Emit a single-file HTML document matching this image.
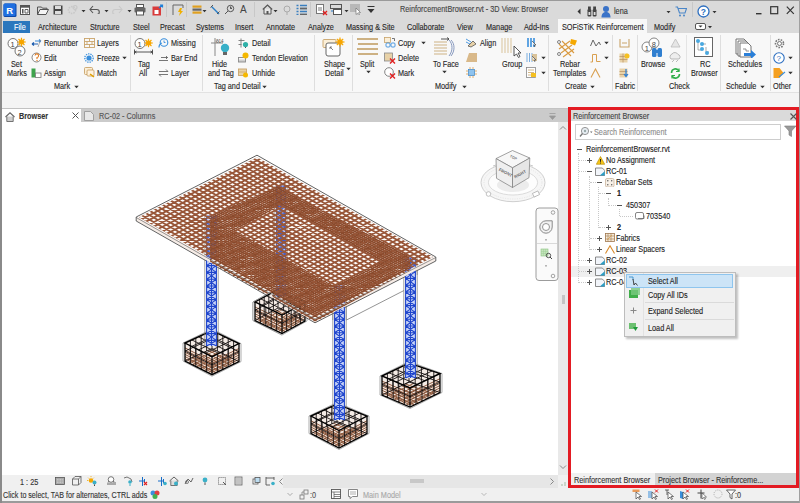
<!DOCTYPE html>
<html><head><meta charset="utf-8">
<style>
*{margin:0;padding:0;box-sizing:border-box}
html,body{width:800px;height:503px;overflow:hidden;background:#f0f0f0}
body{position:relative;font-family:"Liberation Sans",sans-serif;font-size:7.3px;color:#3a3a3a}
.a{position:absolute}
.t{position:absolute;white-space:nowrap;line-height:10px;height:10px;font-size:8.4px;transform:translateY(-0.5px) scaleX(0.87);transform-origin:0 0;color:#262626;-webkit-text-stroke:0.12px currentColor}
.r{background:#f5f5f5}
</style></head><body>
<!-- title bar -->
<div class="a" style="left:0;top:0;width:800px;height:19px;background:#dadada"></div>
<div class="a" style="left:0;top:0;width:800px;height:1px;background:#9a9a9a"></div>
<!-- tab row -->
<div class="a" style="left:0;top:19px;width:800px;height:14px;background:#dadada"></div>
<div class="a" style="left:3px;top:21px;width:27px;height:12px;background:#2b77bd"></div>
<div class="t" style="left:14px;top:22px;color:#fff">File</div>
<div class="a" style="left:558px;top:19px;width:89px;height:15px;background:#f8f8f8"></div>
<!-- ribbon -->
<div class="a" style="left:0;top:33px;width:800px;height:59px;background:#f8f8f8"></div>
<div class="a" style="left:0;top:92px;width:800px;height:1px;background:#e2e2e2"></div>
<!-- strip -->
<div class="a" style="left:0;top:93px;width:800px;height:15px;background:#f4f4f4"></div>
<div class="a" style="left:0;top:108px;width:568px;height:1px;background:#c2c2c2"></div>
<!-- view tabs -->
<div class="a" style="left:0;top:109px;width:568px;height:13px;background:#cbcbcb"></div>
<div class="a" style="left:2px;top:109px;width:79px;height:14px;background:#ffffff"></div>
<!-- viewport -->
<div class="a" style="left:2px;top:122px;width:556px;height:353px;background:#ffffff"></div>
<div class="a" style="left:558px;top:122px;width:10px;height:353px;background:#e9e9e9"></div>
<!--MODEL--><svg class="a" style="left:0;top:0" width="800" height="503" viewBox="0 0 800 503">
<defs>
<clipPath id="slabc"><polygon points="138.8,217.3 257.0,157.2 433.2,257.0 315.0,317.0"/></clipPath>
<clipPath id="bandc"><path d="M210.0,216.0 278.0,186.0 409.0,256.0 411.0,270.0 315.0,322.0 210.0,263.0Z M235.0,230.5 281.0,205.0 380.0,261.0 334.0,286.0Z" clip-rule="evenodd"/></clipPath>
<clipPath id="bfc"><polygon points="250,292 270,292 282,314 282,340 250,340"/></clipPath>
<clipPath id="outs"><path d="M0 0H800V503H0Z M137.0,217.0 257.0,156.0 435.0,257.0 435.0,261.0 315.0,322.0 137.0,221.0Z" clip-rule="evenodd"/></clipPath>
</defs>
<polygon points="253.0,302.0 278.0,288.0 307.0,302.5 307.0,321.0 282.0,335.0 253.0,320.5" fill="#fff" stroke="#777" stroke-width="0.6"/>
<polygon points="255.0,302.0 278.0,289.5 305.0,302.5 305.0,321.0 282.0,333.5 255.0,320.5" fill="#f4ebe5"/>
<path d="M258.3 318.7L285.3 331.7M258.9 322.4L281.9 309.9M261.6 316.9L288.6 329.9M262.7 324.2L285.7 311.7M264.9 315.1L291.9 328.1M266.6 326.1L289.6 313.6M268.1 313.4L295.1 326.4M270.4 327.9L293.4 315.4M271.4 311.6L298.4 324.6M274.3 329.8L297.3 317.3M274.7 309.8L301.7 322.8M278.1 331.6L301.1 319.1M255.0 307.0L282.0 320.0L305.0 307.5M255.0 309.3L282.0 322.3L305.0 309.8M255.0 311.5L282.0 324.5L305.0 312.0M255.0 313.8L282.0 326.8L305.0 314.3M255.0 316.0L282.0 329.0L305.0 316.5M255.0 318.3L282.0 331.3L305.0 318.8" fill="none" stroke="#8e5a3e" stroke-width="1.0"/>
<path d="M278.0 289.5V308.0M255.0 320.5L278.0 308.0L305.0 321.0M260.4 304.6v18.5M286.6 312.5v18.5M259.6 299.5v18.5M283.4 292.1v18.5M265.8 307.2v18.5M291.2 310.0v18.5M264.2 297.0v18.5M288.8 294.7v18.5M271.2 309.8v18.5M295.8 307.5v18.5M268.8 294.5v18.5M294.2 297.3v18.5M276.6 312.4v18.5M300.4 305.0v18.5M273.4 292.0v18.5M299.6 299.9v18.5M260.8 298.9L287.8 311.9M261.8 305.2L284.8 292.8M266.5 295.8L293.5 308.8M268.5 308.5L291.5 296.0M272.2 292.6L299.2 305.6M275.2 311.8L298.2 299.2M255.0 310.3L282.0 323.3L305.0 310.8M255.0 310.3L278.0 297.8L305.0 310.8" fill="none" stroke="#161212" stroke-width="0.9"/>
<polygon points="255.0,302.0 278.0,289.5 305.0,302.5 282.0,315.0" fill="none" stroke="#000" stroke-width="1.4"/>
<polyline points="255.0,302.0 255.0,320.5 282.0,333.5 305.0,321.0 305.0,302.5" fill="none" stroke="#000" stroke-width="1.3"/>
<path d="M282.0 315.0V333.5" stroke="#000" stroke-width="1.2"/>
<polygon points="183.0,343.0 212.0,329.0 241.0,343.6 241.0,361.6 212.0,376.2 183.0,361.0" fill="#fff" stroke="#777" stroke-width="0.6"/>
<polygon points="185.0,343.0 212.0,330.5 239.0,343.6 239.0,361.6 212.0,374.7 185.0,361.0" fill="#f4ebe5"/>
<path d="M188.9 359.2L215.9 372.8M188.9 363.0L215.9 350.4M192.7 357.4L219.7 371.0M192.7 364.9L219.7 352.2M196.6 355.6L223.6 369.1M196.6 366.9L223.6 354.1M200.4 353.9L227.4 367.2M200.4 368.8L227.4 356.0M204.3 352.1L231.3 365.3M204.3 370.8L231.3 357.9M208.1 350.3L235.1 363.5M208.1 372.7L235.1 359.7M185.0 347.9L212.0 361.6L239.0 348.5M185.0 350.1L212.0 363.8L239.0 350.7M185.0 352.3L212.0 366.0L239.0 352.9M185.0 354.4L212.0 368.1L239.0 355.0M185.0 356.6L212.0 370.3L239.0 357.2M185.0 358.8L212.0 372.5L239.0 359.4" fill="none" stroke="#8e5a3e" stroke-width="1.0"/>
<path d="M212.0 330.5V348.5M185.0 361.0L212.0 348.5L239.0 361.6M190.4 345.7v18M217.4 354.1v18M190.4 340.5v18M217.4 333.1v18M195.8 348.5v18M222.8 351.5v18M195.8 338.0v18M222.8 335.7v18M201.2 351.2v18M228.2 348.8v18M201.2 335.5v18M228.2 338.4v18M206.6 354.0v18M233.6 346.2v18M206.6 333.0v18M233.6 341.0v18M191.8 339.9L218.8 353.4M191.8 346.4L218.8 333.8M198.5 336.8L225.5 350.1M198.5 349.9L225.5 337.1M205.2 333.6L232.2 346.9M205.2 353.3L232.2 340.3M185.0 351.1L212.0 364.8L239.0 351.7M185.0 351.1L212.0 338.6L239.0 351.7" fill="none" stroke="#161212" stroke-width="0.9"/>
<polygon points="185.0,343.0 212.0,330.5 239.0,343.6 212.0,356.7" fill="none" stroke="#000" stroke-width="1.4"/>
<polyline points="185.0,343.0 185.0,361.0 212.0,374.7 239.0,361.6 239.0,343.6" fill="none" stroke="#000" stroke-width="1.3"/>
<path d="M212.0 356.7V374.7" stroke="#000" stroke-width="1.2"/>
<polygon points="380.0,376.0 409.0,361.5 442.0,373.5 442.0,392.5 410.0,408.5 380.0,395.0" fill="#fff" stroke="#777" stroke-width="0.6"/>
<polygon points="382.0,376.0 409.0,363.0 440.0,373.5 440.0,392.5 410.0,407.0 382.0,395.0" fill="#f4ebe5"/>
<path d="M385.9 393.1L414.3 404.9M386.0 396.7L413.4 383.5M389.7 391.3L418.6 402.9M390.0 398.4L417.9 385.0M393.6 389.4L422.9 400.8M394.0 400.1L422.3 386.5M397.4 387.6L427.1 398.7M398.0 401.9L426.7 388.0M401.3 385.7L431.4 396.6M402.0 403.6L431.1 389.5M405.1 383.9L435.7 394.6M406.0 405.3L435.6 391.0M382.0 381.2L410.0 393.2L440.0 378.7M382.0 383.5L410.0 395.5L440.0 381.0M382.0 385.8L410.0 397.8L440.0 383.3M382.0 388.1L410.0 400.1L440.0 385.6M382.0 390.4L410.0 402.4L440.0 387.9M382.0 392.7L410.0 404.7L440.0 390.2" fill="none" stroke="#8e5a3e" stroke-width="1.0"/>
<path d="M409.0 363.0V382.0M382.0 395.0L409.0 382.0L440.0 392.5M387.6 378.4v19M416.0 385.1v19M387.4 373.4v19M415.2 365.1v19M393.2 380.8v19M422.0 382.2v19M392.8 370.8v19M421.4 367.2v19M398.8 383.2v19M428.0 379.3v19M398.2 368.2v19M427.6 369.3v19M404.4 385.6v19M434.0 376.4v19M403.6 365.6v19M433.8 371.4v19M388.8 372.8L417.5 384.4M389.0 379.0L416.8 365.6M395.5 369.5L425.0 380.8M396.0 382.0L424.5 368.2M402.2 366.2L432.5 377.1M403.0 385.0L432.2 370.9M382.0 384.6L410.0 396.6L440.0 382.1M382.0 384.6L409.0 371.6L440.0 382.1" fill="none" stroke="#161212" stroke-width="0.9"/>
<polygon points="382.0,376.0 409.0,363.0 440.0,373.5 410.0,388.0" fill="none" stroke="#000" stroke-width="1.4"/>
<polyline points="382.0,376.0 382.0,395.0 410.0,407.0 440.0,392.5 440.0,373.5" fill="none" stroke="#000" stroke-width="1.3"/>
<path d="M410.0 388.0V407.0" stroke="#000" stroke-width="1.2"/>
<polygon points="309.0,416.0 337.0,402.5 369.0,416.0 369.0,433.5 339.0,449.5 309.0,433.5" fill="#fff" stroke="#777" stroke-width="0.6"/>
<polygon points="311.0,416.0 337.0,404.0 367.0,416.0 367.0,433.5 339.0,448.0 311.0,433.5" fill="#f4ebe5"/>
<path d="M314.7 431.8L343.0 445.9M315.0 435.6L341.3 423.2M318.4 430.1L347.0 443.9M319.0 437.6L345.6 424.9M322.1 428.4L351.0 441.8M323.0 439.7L349.9 426.6M325.9 426.6L355.0 439.7M327.0 441.8L354.1 428.4M329.6 424.9L359.0 437.6M331.0 443.9L358.4 430.1M333.3 423.2L363.0 435.6M335.0 445.9L362.7 431.8M311.0 420.8L339.0 435.2L367.0 420.8M311.0 422.9L339.0 437.4L367.0 422.9M311.0 425.0L339.0 439.5L367.0 425.0M311.0 427.1L339.0 441.6L367.0 427.1M311.0 429.2L339.0 443.8L367.0 429.2M311.0 431.4L339.0 445.9L367.0 431.4" fill="none" stroke="#8e5a3e" stroke-width="1.0"/>
<path d="M337.0 404.0V421.5M311.0 433.5L337.0 421.5L367.0 433.5M316.6 418.9v17.5M344.6 427.6v17.5M316.2 413.6v17.5M343.0 406.4v17.5M322.2 421.8v17.5M350.2 424.7v17.5M321.4 411.2v17.5M349.0 408.8v17.5M327.8 424.7v17.5M355.8 421.8v17.5M326.6 408.8v17.5M355.0 411.2v17.5M333.4 427.6v17.5M361.4 418.9v17.5M331.8 406.4v17.5M361.0 413.6v17.5M317.5 413.0L346.0 426.9M318.0 419.6L344.5 407.0M324.0 410.0L353.0 423.2M325.0 423.2L352.0 410.0M330.5 407.0L360.0 419.6M332.0 426.9L359.5 413.0M311.0 423.9L339.0 438.4L367.0 423.9M311.0 423.9L337.0 411.9L367.0 423.9" fill="none" stroke="#161212" stroke-width="0.9"/>
<polygon points="311.0,416.0 337.0,404.0 367.0,416.0 339.0,430.5" fill="none" stroke="#000" stroke-width="1.4"/>
<polyline points="311.0,416.0 311.0,433.5 339.0,448.0 367.0,433.5 367.0,416.0" fill="none" stroke="#000" stroke-width="1.3"/>
<path d="M339.0 430.5V448.0" stroke="#000" stroke-width="1.2"/>
<g opacity="0.85">
<path d="M274.8 186V296M287.2 186V296" stroke="#7a7a7a" stroke-width="0.7" fill="none"/>
<rect x="276" y="186" width="10" height="110" fill="#c9d5f8"/>
<path d="M276.6 186V296M281.0 186V296M285.4 186V296M276.6 186.0L285.4 192.8M285.4 186.0L276.6 192.8M276.6 186.0H285.4M276.6 192.8L285.4 199.6M285.4 192.8L276.6 199.6M276.6 192.8H285.4M276.6 199.6L285.4 206.4M285.4 199.6L276.6 206.4M276.6 199.6H285.4M276.6 206.4L285.4 213.2M285.4 206.4L276.6 213.2M276.6 206.4H285.4M276.6 213.2L285.4 220.0M285.4 213.2L276.6 220.0M276.6 213.2H285.4M276.6 220.0L285.4 226.8M285.4 220.0L276.6 226.8M276.6 220.0H285.4M276.6 226.8L285.4 233.6M285.4 226.8L276.6 233.6M276.6 226.8H285.4M276.6 233.6L285.4 240.4M285.4 233.6L276.6 240.4M276.6 233.6H285.4M276.6 240.4L285.4 247.2M285.4 240.4L276.6 247.2M276.6 240.4H285.4M276.6 247.2L285.4 254.0M285.4 247.2L276.6 254.0M276.6 247.2H285.4M276.6 254.0L285.4 260.8M285.4 254.0L276.6 260.8M276.6 254.0H285.4M276.6 260.8L285.4 267.6M285.4 260.8L276.6 267.6M276.6 260.8H285.4M276.6 267.6L285.4 274.4M285.4 267.6L276.6 274.4M276.6 267.6H285.4M276.6 274.4L285.4 281.2M285.4 274.4L276.6 281.2M276.6 274.4H285.4M276.6 281.2L285.4 288.0M285.4 281.2L276.6 288.0M276.6 281.2H285.4M276.6 288.0L285.4 294.8M285.4 288.0L276.6 294.8M276.6 288.0H285.4M276.6 294.8L285.4 296.0M285.4 294.8L276.6 296.0M276.6 294.8H285.4" fill="none" stroke="#1f45cc" stroke-width="1.1"/>
<path d="M204.8 216V259M218.2 216V259" stroke="#7a7a7a" stroke-width="0.7" fill="none"/>
<rect x="206" y="216" width="11" height="43" fill="#c9d5f8"/>
<path d="M206.6 216V259M211.5 216V259M216.4 216V259M206.6 216.0L216.4 222.8M216.4 216.0L206.6 222.8M206.6 216.0H216.4M206.6 222.8L216.4 229.6M216.4 222.8L206.6 229.6M206.6 222.8H216.4M206.6 229.6L216.4 236.4M216.4 229.6L206.6 236.4M206.6 229.6H216.4M206.6 236.4L216.4 243.2M216.4 236.4L206.6 243.2M206.6 236.4H216.4M206.6 243.2L216.4 250.0M216.4 243.2L206.6 250.0M206.6 243.2H216.4M206.6 250.0L216.4 256.8M216.4 250.0L206.6 256.8M206.6 250.0H216.4M206.6 256.8L216.4 259.0M216.4 256.8L206.6 259.0M206.6 256.8H216.4" fill="none" stroke="#1f45cc" stroke-width="1.1"/>
<path d="M403.8 258V275M417.2 258V275" stroke="#7a7a7a" stroke-width="0.7" fill="none"/>
<rect x="405" y="258" width="11" height="17" fill="#c9d5f8"/>
<path d="M405.6 258V275M410.5 258V275M415.4 258V275M405.6 258.0L415.4 264.8M415.4 258.0L405.6 264.8M405.6 258.0H415.4M405.6 264.8L415.4 271.6M415.4 264.8L405.6 271.6M405.6 264.8H415.4M405.6 271.6L415.4 275.0M415.4 271.6L405.6 275.0M405.6 271.6H415.4" fill="none" stroke="#1f45cc" stroke-width="1.1"/>
<path d="M332.8 286V320M346.2 286V320" stroke="#7a7a7a" stroke-width="0.7" fill="none"/>
<rect x="334" y="286" width="11" height="34" fill="#c9d5f8"/>
<path d="M334.6 286V320M339.5 286V320M344.4 286V320M334.6 286.0L344.4 292.8M344.4 286.0L334.6 292.8M334.6 286.0H344.4M334.6 292.8L344.4 299.6M344.4 292.8L334.6 299.6M334.6 292.8H344.4M334.6 299.6L344.4 306.4M344.4 299.6L334.6 306.4M334.6 299.6H344.4M334.6 306.4L344.4 313.2M344.4 306.4L334.6 313.2M334.6 306.4H344.4M334.6 313.2L344.4 320.0M344.4 313.2L334.6 320.0M334.6 313.2H344.4" fill="none" stroke="#1f45cc" stroke-width="1.1"/>
</g>
<polygon points="137.0,217.0 315.0,318.0 435.0,257.0 435.0,261.0 315.0,322.0 137.0,221.0" fill="#f6ece6"/>
<g clip-path="url(#slabc)" stroke="#985638" stroke-width="1.8">
<path d="M122.52 215.24L254.52 148.14M126.76 217.65L258.76 150.55M131.00 220.05L263.00 152.95M135.24 222.45L267.24 155.35M139.48 224.86L271.48 157.76M143.71 227.26L275.71 160.16M147.95 229.67L279.95 162.57M152.19 232.07L284.19 164.97M156.43 234.48L288.43 167.38M160.67 236.88L292.67 169.78M164.90 239.29L296.90 172.19M169.14 241.69L301.14 174.59M173.38 244.10L305.38 177.00M177.62 246.50L309.62 179.40M181.86 248.91L313.86 181.81M186.10 251.31L318.10 184.21M190.33 253.72L322.33 186.62M194.57 256.12L326.57 189.02M198.81 258.53L330.81 191.43M203.05 260.93L335.05 193.83M207.29 263.34L339.29 196.24M211.52 265.74L343.52 198.64M215.76 268.15L347.76 201.05M220.00 270.55L352.00 203.45M224.24 272.95L356.24 205.85M228.48 275.36L360.48 208.26M232.71 277.76L364.71 210.66M236.95 280.17L368.95 213.07M241.19 282.57L373.19 215.47M245.43 284.98L377.43 217.88M249.67 287.38L381.67 220.28M253.90 289.79L385.90 222.69M258.14 292.19L390.14 225.09M262.38 294.60L394.38 227.50M266.62 297.00L398.62 229.90M270.86 299.41L402.86 232.31M275.10 301.81L407.10 234.71M279.33 304.22L411.33 237.12M283.57 306.62L415.57 239.52M287.81 309.03L419.81 241.93M292.05 311.43L424.05 244.33M296.29 313.84L428.29 246.74M300.52 316.24L432.52 249.14M304.76 318.65L436.76 251.55M309.00 321.05L441.00 253.95M313.24 323.45L445.24 256.35M317.48 325.86L449.48 258.76M119.82 216.16L315.62 327.26M123.96 214.05L319.76 325.15M128.10 211.95L323.90 323.05M132.24 209.85L328.04 320.95M136.38 207.74L332.18 318.84M140.51 205.64L336.31 316.74M144.65 203.54L340.45 314.64M148.79 201.43L344.59 312.53M152.93 199.33L348.73 310.43M157.07 197.23L352.87 308.33M161.20 195.12L357.00 306.22M165.34 193.02L361.14 304.12M169.48 190.92L365.28 302.02M173.62 188.81L369.42 299.91M177.76 186.71L373.56 297.81M181.89 184.61L377.69 295.71M186.03 182.50L381.83 293.60M190.17 180.40L385.97 291.50M194.31 178.29L390.11 289.39M198.44 176.19L394.24 287.29M202.58 174.09L398.38 285.19M206.72 171.98L402.52 283.08M210.86 169.88L406.66 280.98M215.00 167.78L410.80 278.88M219.13 165.67L414.93 276.77M223.27 163.57L419.07 274.67M227.41 161.47L423.21 272.57M231.55 159.36L427.35 270.46M235.69 157.26L431.49 268.36M239.82 155.16L435.62 266.26M243.96 153.05L439.76 264.15M248.10 150.95L443.90 262.05M252.24 148.85L448.04 259.95M256.38 146.74L452.18 257.84" fill="none"/>
</g>
<g clip-path="url(#bandc)" stroke="#8a4a2c" stroke-width="1.3">
<path d="M126.71 215.39L258.71 148.29M130.95 217.80L262.95 150.70M135.19 220.20L267.19 153.10M139.43 222.61L271.43 155.51M143.66 225.01L275.66 157.91M147.90 227.41L279.90 160.31M152.14 229.82L284.14 162.72M156.38 232.22L288.38 165.12M160.62 234.63L292.62 167.53M164.85 237.03L296.85 169.93M169.09 239.44L301.09 172.34M173.33 241.84L305.33 174.74M177.57 244.25L309.57 177.15M181.81 246.65L313.81 179.55M186.05 249.06L318.05 181.96M190.28 251.46L322.28 184.36M194.52 253.87L326.52 186.77M198.76 256.27L330.76 189.17M203.00 258.68L335.00 191.58M207.24 261.08L339.24 193.98M211.47 263.49L343.47 196.39M215.71 265.89L347.71 198.79M219.95 268.30L351.95 201.20M224.19 270.70L356.19 203.60M228.43 273.11L360.43 206.01M232.66 275.51L364.66 208.41M236.90 277.91L368.90 210.81M241.14 280.32L373.14 213.22M245.38 282.72L377.38 215.62M249.62 285.13L381.62 218.03M253.85 287.53L385.85 220.43M258.09 289.94L390.09 222.84M262.33 292.34L394.33 225.24M266.57 294.75L398.57 227.65M270.81 297.15L402.81 230.05M275.05 299.56L407.05 232.46M279.28 301.96L411.28 234.86M283.52 304.37L415.52 237.27M287.76 306.77L419.76 239.67M292.00 309.18L424.00 242.08M296.24 311.58L428.24 244.48M300.47 313.99L432.47 246.89M304.71 316.39L436.71 249.29M308.95 318.80L440.95 251.70M313.19 321.20L445.19 254.10M317.43 323.61L449.43 256.51M321.66 326.01L453.66 258.91M124.01 216.31L319.81 327.41M128.15 214.20L323.95 325.30M132.29 212.10L328.09 323.20M136.43 210.00L332.23 321.10M140.56 207.89L336.36 318.99M144.70 205.79L340.50 316.89M148.84 203.69L344.64 314.79M152.98 201.58L348.78 312.68M157.12 199.48L352.92 310.58M161.25 197.38L357.05 308.48M165.39 195.27L361.19 306.37M169.53 193.17L365.33 304.27M173.67 191.07L369.47 302.17M177.81 188.96L373.61 300.06M181.94 186.86L377.74 297.96M186.08 184.76L381.88 295.86M190.22 182.65L386.02 293.75M194.36 180.55L390.16 291.65M198.49 178.45L394.29 289.55M202.63 176.34L398.43 287.44M206.77 174.24L402.57 285.34M210.91 172.14L406.71 283.24M215.05 170.03L410.85 281.13M219.18 167.93L414.98 279.03M223.32 165.82L419.12 276.92M227.46 163.72L423.26 274.82M231.60 161.62L427.40 272.72M235.74 159.51L431.54 270.61M239.87 157.41L435.67 268.51M244.01 155.31L439.81 266.41M248.15 153.20L443.95 264.30M252.29 151.10L448.09 262.20M256.43 149.00L452.23 260.10M260.56 146.89L456.36 257.99" fill="none"/>
</g>
<polygon points="136.2,217.0 257.0,155.2 435.8,257.0 435.8,261.0 315.0,322.8 136.2,221.0" fill="none" stroke="#3a3a3a" stroke-width="0.8"/>
<polyline points="136.2,217.5 315.0,319.0 435.8,257.5" fill="none" stroke="#555" stroke-width="0.6"/>
<g clip-path="url(#bfc)">
<polygon points="253.0,302.0 278.0,288.0 307.0,302.5 307.0,321.0 282.0,335.0 253.0,320.5" fill="#fff" stroke="#777" stroke-width="0.6"/>
<polygon points="255.0,302.0 278.0,289.5 305.0,302.5 305.0,321.0 282.0,333.5 255.0,320.5" fill="#f4ebe5"/>
<path d="M258.3 318.7L285.3 331.7M258.9 322.4L281.9 309.9M261.6 316.9L288.6 329.9M262.7 324.2L285.7 311.7M264.9 315.1L291.9 328.1M266.6 326.1L289.6 313.6M268.1 313.4L295.1 326.4M270.4 327.9L293.4 315.4M271.4 311.6L298.4 324.6M274.3 329.8L297.3 317.3M274.7 309.8L301.7 322.8M278.1 331.6L301.1 319.1M255.0 307.0L282.0 320.0L305.0 307.5M255.0 309.3L282.0 322.3L305.0 309.8M255.0 311.5L282.0 324.5L305.0 312.0M255.0 313.8L282.0 326.8L305.0 314.3M255.0 316.0L282.0 329.0L305.0 316.5M255.0 318.3L282.0 331.3L305.0 318.8" fill="none" stroke="#8e5a3e" stroke-width="1.0"/>
<path d="M278.0 289.5V308.0M255.0 320.5L278.0 308.0L305.0 321.0M260.4 304.6v18.5M286.6 312.5v18.5M259.6 299.5v18.5M283.4 292.1v18.5M265.8 307.2v18.5M291.2 310.0v18.5M264.2 297.0v18.5M288.8 294.7v18.5M271.2 309.8v18.5M295.8 307.5v18.5M268.8 294.5v18.5M294.2 297.3v18.5M276.6 312.4v18.5M300.4 305.0v18.5M273.4 292.0v18.5M299.6 299.9v18.5M260.8 298.9L287.8 311.9M261.8 305.2L284.8 292.8M266.5 295.8L293.5 308.8M268.5 308.5L291.5 296.0M272.2 292.6L299.2 305.6M275.2 311.8L298.2 299.2M255.0 310.3L282.0 323.3L305.0 310.8M255.0 310.3L278.0 297.8L305.0 310.8" fill="none" stroke="#161212" stroke-width="0.9"/>
<polygon points="255.0,302.0 278.0,289.5 305.0,302.5 282.0,315.0" fill="none" stroke="#000" stroke-width="1.4"/>
<polyline points="255.0,302.0 255.0,320.5 282.0,333.5 305.0,321.0 305.0,302.5" fill="none" stroke="#000" stroke-width="1.3"/>
<path d="M282.0 315.0V333.5" stroke="#000" stroke-width="1.2"/>
</g>
<path d="M346.5 320L404 290.5" stroke="#666" stroke-width="0.7" fill="none"/>
<g clip-path="url(#outs)">
<path d="M204.8 218V346M218.2 218V346" stroke="#7a7a7a" stroke-width="0.7" fill="none"/>
<rect x="206" y="218" width="11" height="128" fill="#c9d5f8"/>
<path d="M206.6 218V346M211.5 218V346M216.4 218V346M206.6 218.0L216.4 224.8M216.4 218.0L206.6 224.8M206.6 218.0H216.4M206.6 224.8L216.4 231.6M216.4 224.8L206.6 231.6M206.6 224.8H216.4M206.6 231.6L216.4 238.4M216.4 231.6L206.6 238.4M206.6 231.6H216.4M206.6 238.4L216.4 245.2M216.4 238.4L206.6 245.2M206.6 238.4H216.4M206.6 245.2L216.4 252.0M216.4 245.2L206.6 252.0M206.6 245.2H216.4M206.6 252.0L216.4 258.8M216.4 252.0L206.6 258.8M206.6 252.0H216.4M206.6 258.8L216.4 265.6M216.4 258.8L206.6 265.6M206.6 258.8H216.4M206.6 265.6L216.4 272.4M216.4 265.6L206.6 272.4M206.6 265.6H216.4M206.6 272.4L216.4 279.2M216.4 272.4L206.6 279.2M206.6 272.4H216.4M206.6 279.2L216.4 286.0M216.4 279.2L206.6 286.0M206.6 279.2H216.4M206.6 286.0L216.4 292.8M216.4 286.0L206.6 292.8M206.6 286.0H216.4M206.6 292.8L216.4 299.6M216.4 292.8L206.6 299.6M206.6 292.8H216.4M206.6 299.6L216.4 306.4M216.4 299.6L206.6 306.4M206.6 299.6H216.4M206.6 306.4L216.4 313.2M216.4 306.4L206.6 313.2M206.6 306.4H216.4M206.6 313.2L216.4 320.0M216.4 313.2L206.6 320.0M206.6 313.2H216.4M206.6 320.0L216.4 326.8M216.4 320.0L206.6 326.8M206.6 320.0H216.4M206.6 326.8L216.4 333.6M216.4 326.8L206.6 333.6M206.6 326.8H216.4M206.6 333.6L216.4 340.4M216.4 333.6L206.6 340.4M206.6 333.6H216.4M206.6 340.4L216.4 346.0M216.4 340.4L206.6 346.0M206.6 340.4H216.4" fill="none" stroke="#1f45cc" stroke-width="1.1"/>
<path d="M403.8 258V378M417.2 258V378" stroke="#7a7a7a" stroke-width="0.7" fill="none"/>
<rect x="405" y="258" width="11" height="120" fill="#c9d5f8"/>
<path d="M405.6 258V378M410.5 258V378M415.4 258V378M405.6 258.0L415.4 264.8M415.4 258.0L405.6 264.8M405.6 258.0H415.4M405.6 264.8L415.4 271.6M415.4 264.8L405.6 271.6M405.6 264.8H415.4M405.6 271.6L415.4 278.4M415.4 271.6L405.6 278.4M405.6 271.6H415.4M405.6 278.4L415.4 285.2M415.4 278.4L405.6 285.2M405.6 278.4H415.4M405.6 285.2L415.4 292.0M415.4 285.2L405.6 292.0M405.6 285.2H415.4M405.6 292.0L415.4 298.8M415.4 292.0L405.6 298.8M405.6 292.0H415.4M405.6 298.8L415.4 305.6M415.4 298.8L405.6 305.6M405.6 298.8H415.4M405.6 305.6L415.4 312.4M415.4 305.6L405.6 312.4M405.6 305.6H415.4M405.6 312.4L415.4 319.2M415.4 312.4L405.6 319.2M405.6 312.4H415.4M405.6 319.2L415.4 326.0M415.4 319.2L405.6 326.0M405.6 319.2H415.4M405.6 326.0L415.4 332.8M415.4 326.0L405.6 332.8M405.6 326.0H415.4M405.6 332.8L415.4 339.6M415.4 332.8L405.6 339.6M405.6 332.8H415.4M405.6 339.6L415.4 346.4M415.4 339.6L405.6 346.4M405.6 339.6H415.4M405.6 346.4L415.4 353.2M415.4 346.4L405.6 353.2M405.6 346.4H415.4M405.6 353.2L415.4 360.0M415.4 353.2L405.6 360.0M405.6 353.2H415.4M405.6 360.0L415.4 366.8M415.4 360.0L405.6 366.8M405.6 360.0H415.4M405.6 366.8L415.4 373.6M415.4 366.8L405.6 373.6M405.6 366.8H415.4M405.6 373.6L415.4 378.0M415.4 373.6L405.6 378.0M405.6 373.6H415.4" fill="none" stroke="#1f45cc" stroke-width="1.1"/>
<path d="M332.8 292V420M346.2 292V420" stroke="#7a7a7a" stroke-width="0.7" fill="none"/>
<rect x="334" y="292" width="11" height="128" fill="#c9d5f8"/>
<path d="M334.6 292V420M339.5 292V420M344.4 292V420M334.6 292.0L344.4 298.8M344.4 292.0L334.6 298.8M334.6 292.0H344.4M334.6 298.8L344.4 305.6M344.4 298.8L334.6 305.6M334.6 298.8H344.4M334.6 305.6L344.4 312.4M344.4 305.6L334.6 312.4M334.6 305.6H344.4M334.6 312.4L344.4 319.2M344.4 312.4L334.6 319.2M334.6 312.4H344.4M334.6 319.2L344.4 326.0M344.4 319.2L334.6 326.0M334.6 319.2H344.4M334.6 326.0L344.4 332.8M344.4 326.0L334.6 332.8M334.6 326.0H344.4M334.6 332.8L344.4 339.6M344.4 332.8L334.6 339.6M334.6 332.8H344.4M334.6 339.6L344.4 346.4M344.4 339.6L334.6 346.4M334.6 339.6H344.4M334.6 346.4L344.4 353.2M344.4 346.4L334.6 353.2M334.6 346.4H344.4M334.6 353.2L344.4 360.0M344.4 353.2L334.6 360.0M334.6 353.2H344.4M334.6 360.0L344.4 366.8M344.4 360.0L334.6 366.8M334.6 360.0H344.4M334.6 366.8L344.4 373.6M344.4 366.8L334.6 373.6M334.6 366.8H344.4M334.6 373.6L344.4 380.4M344.4 373.6L334.6 380.4M334.6 373.6H344.4M334.6 380.4L344.4 387.2M344.4 380.4L334.6 387.2M334.6 380.4H344.4M334.6 387.2L344.4 394.0M344.4 387.2L334.6 394.0M334.6 387.2H344.4M334.6 394.0L344.4 400.8M344.4 394.0L334.6 400.8M334.6 394.0H344.4M334.6 400.8L344.4 407.6M344.4 400.8L334.6 407.6M334.6 400.8H344.4M334.6 407.6L344.4 414.4M344.4 407.6L334.6 414.4M334.6 407.6H344.4M334.6 414.4L344.4 420.0M344.4 414.4L334.6 420.0M334.6 414.4H344.4" fill="none" stroke="#1f45cc" stroke-width="1.1"/>
</g>
</svg>
<!--/MODEL-->
<!-- bottom view bar -->
<div class="a" style="left:2px;top:475px;width:281px;height:13px;background:#f0f0f0"></div>
<div class="a" style="left:283px;top:475px;width:275px;height:13px;background:#e6e6e6"></div>
<!-- status -->
<div class="a" style="left:0;top:488px;width:800px;height:14px;background:#f0f0f0"></div>
<div class="a" style="left:0;top:501px;width:800px;height:2px;background:#9a9a9a"></div>
<div class="a" style="left:0;top:0;width:2px;height:503px;background:#8a8a8a"></div><div class="a" style="left:799px;top:0;width:1px;height:503px;background:#a0a0a0"></div>
<!-- panel -->
<div class="a" style="left:568px;top:107px;width:232px;height:381px;background:#e31b23"></div>
<div class="a" style="left:571px;top:110px;width:225px;height:375px;background:#ffffff"></div>
<div class="a" style="left:571px;top:110px;width:225px;height:11px;background:#dadada"></div>
<div class="a" style="left:799px;top:107px;width:1px;height:381px;background:#9a9a9a"></div>


<div class="t" style="left:38px;top:21.5px;">Architecture</div>
<div class="t" style="left:90px;top:21.5px;">Structure</div>
<div class="t" style="left:133px;top:21.5px;">Steel</div>
<div class="t" style="left:160px;top:21.5px;">Precast</div>
<div class="t" style="left:196px;top:21.5px;">Systems</div>
<div class="t" style="left:235px;top:21.5px;">Insert</div>
<div class="t" style="left:266px;top:21.5px;">Annotate</div>
<div class="t" style="left:308px;top:21.5px;">Analyze</div>
<div class="t" style="left:346px;top:21.5px;">Massing &amp; Site</div>
<div class="t" style="left:407px;top:21.5px;">Collaborate</div>
<div class="t" style="left:457px;top:21.5px;">View</div>
<div class="t" style="left:486px;top:21.5px;">Manage</div>
<div class="t" style="left:524px;top:21.5px;">Add-Ins</div>
<div class="t" style="left:562px;top:21.5px;">SOFiSTiK Reinforcement</div>
<div class="t" style="left:654px;top:21.5px;">Modify</div>
<div class="t" style="left:44px;top:37.7px;">Renumber</div>
<div class="t" style="left:44px;top:52.6px;">Edit</div>
<div class="t" style="left:44px;top:67.6px;">Assign</div>
<div class="t" style="left:97px;top:37.7px;">Layers</div>
<div class="t" style="left:97px;top:52.6px;">Freeze</div>
<div class="t" style="left:97px;top:67.6px;">Match</div>
<div class="t" style="left:11px;top:59px;">Set</div>
<div class="t" style="left:7px;top:68px;">Marks</div>
<div class="t" style="left:54px;top:81px;">Mark</div>
<div class="t" style="left:138px;top:59px;">Tag</div>
<div class="t" style="left:139px;top:68px;">All</div>
<div class="t" style="left:171px;top:37.7px;">Missing</div>
<div class="t" style="left:171px;top:52.6px;">Bar End</div>
<div class="t" style="left:171px;top:67.6px;">Layer</div>
<div class="t" style="left:212px;top:59px;">Hide</div>
<div class="t" style="left:208px;top:68px;">and Tag</div>
<div class="t" style="left:252px;top:37.7px;">Detail</div>
<div class="t" style="left:252px;top:52.6px;">Tendon Elevation</div>
<div class="t" style="left:252px;top:67.6px;">Unhide</div>
<div class="t" style="left:214px;top:81px;">Tag and Detail</div>
<div class="t" style="left:324px;top:59px;">Shape</div>
<div class="t" style="left:325px;top:68px;">Detail</div>
<div class="t" style="left:360px;top:59px;">Split</div>
<div class="t" style="left:398px;top:37.7px;">Copy</div>
<div class="t" style="left:398px;top:52.6px;">Delete</div>
<div class="t" style="left:398px;top:67.6px;">Mark</div>
<div class="t" style="left:433px;top:59px;">To Face</div>
<div class="t" style="left:435px;top:81px;">Modify</div>
<div class="t" style="left:480px;top:37.7px;">Align</div>
<div class="t" style="left:502px;top:59px;">Group</div>
<div class="t" style="left:560px;top:59px;">Rebar</div>
<div class="t" style="left:553px;top:68px;">Templates</div>
<div class="t" style="left:565px;top:81px;">Create</div>
<div class="t" style="left:615px;top:81px;">Fabric</div>
<div class="t" style="left:641px;top:59px;">Browse</div>
<div class="t" style="left:669px;top:81px;">Check</div>
<div class="t" style="left:700px;top:59px;">RC</div>
<div class="t" style="left:691px;top:68px;">Browser</div>
<div class="t" style="left:728px;top:59px;">Schedules</div>
<div class="t" style="left:726px;top:81px;">Schedule</div>
<div class="t" style="left:773px;top:81px;">Other</div>
<!--CHROME-->
<svg class="a" style="left:3px;top:3px" width="15" height="15" viewBox="0 0 15 15"><rect x="0.5" y="0.5" width="13" height="13.5" rx="1.5" fill="#0d47a8"/><rect x="0.5" y="0.5" width="12" height="12.5" rx="1.5" fill="#1f6fe0"/><text x="3.2" y="10.5" font-family="Liberation Sans" font-weight="bold" font-size="9.5" fill="#fff">R</text></svg>
<svg class="a" style="left:20px;top:5px" width="10" height="10" viewBox="0 0 10 10"><rect x="0.5" y="0.5" width="9" height="9" fill="#fff" stroke="#555" stroke-width="1"/><rect x="0.5" y="0.5" width="9" height="2.2" fill="#555"/><rect x="2" y="4" width="1.5" height="4.5" fill="#555"/><path d="M5 4.5h3v3.5h-3z" fill="none" stroke="#555" stroke-width="0.9"/></svg>
<svg class="a" style="left:37px;top:5px" width="12" height="10" viewBox="0 0 12 10"><path d="M0.5 2h4l1 1.2h4.5v1.5" fill="none" stroke="#555" stroke-width="1"/><path d="M0.5 2v7.5h8.5l2.5-5h-8.5l-2.5 5" fill="#f4f4f4" stroke="#555" stroke-width="1"/></svg>
<svg class="a" style="left:53px;top:5px" width="10" height="10" viewBox="0 0 10 10"><rect x="0.5" y="0.5" width="9" height="9" fill="#444"/><rect x="2" y="1" width="6" height="3" fill="#ddd"/><rect x="2" y="6" width="6" height="3" fill="#ddd"/></svg>
<svg class="a" style="left:67px;top:4px" width="11" height="11" viewBox="0 0 11 11"><circle cx="5" cy="6" r="3.5" fill="none" stroke="#c8c8c8" stroke-width="1.6" stroke-dasharray="1.5 1"/><circle cx="8" cy="3.5" r="2" fill="none" stroke="#c8c8c8" stroke-width="1.2"/></svg>
<svg class="a" style="left:81px;top:9px" width="5" height="4" viewBox="0 0 5 4"><path d="M0.5 1h4l-2 2.2z" fill="#333"/></svg>
<svg class="a" style="left:104px;top:9px" width="5" height="4" viewBox="0 0 5 4"><path d="M0.5 1h4l-2 2.2z" fill="#333"/></svg>
<svg class="a" style="left:127px;top:9px" width="5" height="4" viewBox="0 0 5 4"><path d="M0.5 1h4l-2 2.2z" fill="#333"/></svg>


<svg class="a" style="left:273px;top:9px" width="5" height="4" viewBox="0 0 5 4"><path d="M0.5 1h4l-2 2.2z" fill="#333"/></svg>
<svg class="a" style="left:344px;top:9px" width="5" height="4" viewBox="0 0 5 4"><path d="M0.5 1h4l-2 2.2z" fill="#333"/></svg>

<svg class="a" style="left:89px;top:5px" width="11" height="9" viewBox="0 0 11 9"><path d="M4 1L1 4.5L4 8M1.3 4.5h6.5a2.5 2.5 0 0 1 0 5" fill="none" stroke="#555" stroke-width="1.1"/></svg>
<svg class="a" style="left:112px;top:5px" width="11" height="9" viewBox="0 0 11 9"><path d="M7 1L10 4.5L7 8M9.7 4.5h-6.5a2.5 2.5 0 0 0 0 5" fill="none" stroke="#c8c8c8" stroke-width="1.1"/></svg>
<svg class="a" style="left:134px;top:4px" width="12" height="12" viewBox="0 0 12 12"><rect x="2.5" y="0.5" width="7" height="3" fill="#fff" stroke="#555"/><rect x="0.5" y="3.5" width="11" height="5" rx="1" fill="#666"/><rect x="2.5" y="7" width="7" height="4" fill="#fff" stroke="#555"/></svg>
<svg class="a" style="left:152px;top:4px" width="12" height="12" viewBox="0 0 12 12"><rect x="0.5" y="2.5" width="8.5" height="9" fill="#d83b3b"/><rect x="2.5" y="6" width="4" height="4" fill="#fff"/><path d="M7 4l3-3M8 1h2.5v2.5" fill="none" stroke="#1e7fd8" stroke-width="1.2"/></svg>
<svg class="a" style="left:166px;top:2px" width="1" height="15" viewBox="0 0 1 15"><rect width="1" height="15" fill="#c8c8c8"/></svg>
<svg class="a" style="left:172px;top:4px" width="13" height="12" viewBox="0 0 13 12"><path d="M1 11V1h10v3" fill="none" stroke="#666" stroke-width="1"/><path d="M8 4l-2 4h2l-1 4 4-5h-2l1-3z" fill="#f0b000"/></svg>
<svg class="a" style="left:186px;top:2px" width="1" height="15" viewBox="0 0 1 15"><rect width="1" height="15" fill="#c8c8c8"/></svg>
<svg class="a" style="left:192px;top:5px" width="10" height="9" viewBox="0 0 10 9"><rect x="0.5" y="0.5" width="9" height="2.2" fill="#e0a020"/><rect x="0.5" y="3.5" width="9" height="2.2" fill="#666"/><rect x="0.5" y="6.5" width="9" height="2.2" fill="#e0a020"/></svg>
<svg class="a" style="left:210px;top:4px" width="11" height="11" viewBox="0 0 11 11"><path d="M1.5 2.5L9 10" stroke="#2a7fc8" stroke-width="1.4"/><path d="M0.5 3.5L3 1M7 10L9.5 7.5" stroke="#555" stroke-width="1"/></svg>
<svg class="a" style="left:224px;top:4px" width="11" height="11" viewBox="0 0 11 11"><circle cx="6.5" cy="4.5" r="3.2" fill="none" stroke="#555" stroke-width="1"/><path d="M6.5 2.5v2h1.5M4 7L1 10" stroke="#555" stroke-width="1"/></svg>
<div class="t" style="left:240px;top:4.5px;font-size:10px;transform:none;color:#444;-webkit-text-stroke:0">A</div>
<svg class="a" style="left:254px;top:2px" width="1" height="15" viewBox="0 0 1 15"><rect width="1" height="15" fill="#c8c8c8"/></svg>
<svg class="a" style="left:262px;top:4px" width="11" height="11" viewBox="0 0 11 11"><path d="M0.8 5.5L5.5 1L10.2 5.5" fill="none" stroke="#555" stroke-width="1.2"/><path d="M2 5v5h7V5" fill="#e8e8e8" stroke="#555" stroke-width="1"/><rect x="4.5" y="7" width="2" height="3" fill="#555"/></svg>
<svg class="a" style="left:282px;top:4px" width="10" height="11" viewBox="0 0 10 11"><circle cx="5" cy="5" r="3" fill="none" stroke="#aaa" stroke-width="1"/><path d="M5 8v3" stroke="#aaa"/></svg>
<svg class="a" style="left:296px;top:4px" width="12" height="11" viewBox="0 0 12 11"><path d="M0.5 1.5h2M4 1.5h7M0.5 4.5h2M4 4.5h7M0.5 7.5h2M4 7.5h7M0.5 10.5h2M4 10.5h7" stroke="#3a7fc0" stroke-width="1.3"/><path d="M4 4.5h7M4 10.5h7" stroke="#666" stroke-width="1.3"/></svg>
<svg class="a" style="left:310px;top:2px" width="1" height="15" viewBox="0 0 1 15"><rect width="1" height="15" fill="#c8c8c8"/></svg>
<svg class="a" style="left:316px;top:4px" width="12" height="12" viewBox="0 0 12 12"><rect x="0.5" y="0.5" width="7" height="9" fill="#fff" stroke="#777"/><rect x="2" y="3" width="4" height="4" fill="#bbb"/><path d="M7 7l4 4M11 7l-4 4" stroke="#e02020" stroke-width="1.3"/></svg>
<svg class="a" style="left:330px;top:4px" width="13" height="11" viewBox="0 0 13 11"><rect x="0.5" y="0.5" width="11" height="4" fill="none" stroke="#555"/><rect x="3.5" y="5.5" width="8" height="5" fill="#fff" stroke="#555"/><path d="M1 7h2" stroke="#2a7fd0" stroke-width="1.2"/></svg>
<svg class="a" style="left:350px;top:4px" width="12" height="11" viewBox="0 0 12 11"><rect x="0" y="0" width="10" height="8" fill="#b8b8b8"/><path d="M6 4l4.5 4.5-2 0.2 1 2-1 .5-1-2-1.5 1.3z" fill="#fff" stroke="#666" stroke-width="0.6"/></svg>
<svg class="a" style="left:367px;top:6px" width="8" height="8" viewBox="0 0 8 8"><path d="M0.5 0.5h7" stroke="#333" stroke-width="1"/><path d="M0.5 3h7l-3.5 4z" fill="#333"/></svg>
<div class="t" style="left:400px;top:4px;color:#444">ReinforcementBrowser.rvt - 3D View: Browser</div>
<svg class="a" style="left:577px;top:7.5px" width="4" height="7" viewBox="0 0 4 7"><path d="M3.5 0.5L0.5 3.5L3.5 6.5z" fill="#333"/></svg>
<svg class="a" style="left:587px;top:5.5px" width="10" height="11" viewBox="0 0 10 11"><rect x="0.5" y="3" width="3.8" height="7.5" rx="1.2" fill="#444"/><rect x="5.7" y="3" width="3.8" height="7.5" rx="1.2" fill="#444"/><rect x="1" y="0.5" width="2.8" height="3" fill="#444"/><rect x="6.2" y="0.5" width="2.8" height="3" fill="#444"/><rect x="1.5" y="6" width="1.8" height="3" fill="#ddd"/><rect x="6.7" y="6" width="1.8" height="3" fill="#ddd"/></svg>
<svg class="a" style="left:601px;top:4.5px" width="10" height="13" viewBox="0 0 10 13"><circle cx="5" cy="4" r="3" fill="#3a73c8"/><path d="M0.5 12.5c0-4 2-5.5 4.5-5.5s4.5 1.5 4.5 5.5z" fill="#3a73c8"/></svg>
<div class="t" style="left:614px;top:5.5px;color:#333">lena</div>
<svg class="a" style="left:666px;top:9.5px" width="5" height="4" viewBox="0 0 5 4"><path d="M0.5 1h4l-2 2.2z" fill="#333"/></svg>
<svg class="a" style="left:675px;top:5.5px" width="12" height="11" viewBox="0 0 12 11"><path d="M0.5 1h2l2 6h5.5l1.5-4.5h-8" fill="none" stroke="#4a86c8" stroke-width="1.1"/><circle cx="5" cy="9.5" r="1" fill="#4a86c8"/><circle cx="9" cy="9.5" r="1" fill="#4a86c8"/></svg>
<svg class="a" style="left:692px;top:2px" width="1" height="15" viewBox="0 0 1 15"><rect width="1" height="15" fill="#c8c8c8"/></svg>
<svg class="a" style="left:697px;top:4.5px" width="13" height="13" viewBox="0 0 13 13"><circle cx="6.5" cy="6.5" r="5.5" fill="#fff" stroke="#2d6fc0" stroke-width="1.3"/><text x="3.8" y="10" font-family="Liberation Sans" font-weight="bold" font-size="8.5" fill="#2d6fc0">?</text></svg>
<svg class="a" style="left:712px;top:9.5px" width="5" height="4" viewBox="0 0 5 4"><path d="M0.5 1h4l-2 2.2z" fill="#333"/></svg>
<svg class="a" style="left:756px;top:12.5px" width="7" height="2" viewBox="0 0 7 2"><rect width="5.5" height="1.4" fill="#333"/></svg>
<svg class="a" style="left:770px;top:6px" width="9" height="9" viewBox="0 0 9 9"><rect x="0.7" y="0.7" width="7" height="7" fill="none" stroke="#333" stroke-width="1.2"/></svg>
<svg class="a" style="left:785.5px;top:6px" width="9" height="9" viewBox="0 0 9 9"><path d="M0.8 0.6L7.8 7.8M7.8 0.6L0.8 7.8" stroke="#333" stroke-width="1.2"/></svg>
<svg class="a" style="left:695px;top:22px" width="17" height="10" viewBox="0 0 17 10"><rect x="0.5" y="1.5" width="10" height="6" rx="1.5" fill="#fff" stroke="#555"/><path d="M3.5 3.5h4l-2 2z" fill="#333"/><path d="M13 4h4l-2 2.2z" fill="#333"/></svg>
<svg class="a" style="left:5px;top:112px" width="10" height="10" viewBox="0 0 10 10"><path d="M0.5 5L5 0.8L9.5 5" fill="none" stroke="#666" stroke-width="1.1"/><path d="M1.8 4.5v5h6.4v-5" fill="#cfcfcf" stroke="#666" stroke-width="0.9"/></svg>
<div class="t" style="left:19px;top:111px;font-weight:bold;color:#333">Browser</div>
<svg class="a" style="left:71px;top:111px" width="9" height="9" viewBox="0 0 9 9"><path d="M1.5 1.5L7.5 7.5M7.5 1.5L1.5 7.5" stroke="#555" stroke-width="1"/></svg>
<svg class="a" style="left:84px;top:111px" width="11" height="10" viewBox="0 0 11 10"><path d="M0.5 0.5h6l3 3v6h-9z" fill="#e8e8e8" stroke="#9a9a9a" stroke-width="0.9"/></svg>
<div class="t" style="left:99px;top:111px;color:#555">RC-02 - Columns</div>
<svg class="a" style="left:549px;top:113px" width="7" height="7" viewBox="0 0 7 7"><path d="M0.5 0.5h6M0.5 3h6l-3 3.5z" stroke="#9a9a9a" fill="#9a9a9a" stroke-width="0.8"/></svg>
<div class="t" style="left:3px;top:490px;color:#333;transform:scaleX(0.85)">Click to select, TAB for alternates, CTRL adds</div>
<div class="t" style="left:363px;top:490px;color:#a8a8a8">Main Model</div>
<div class="t" style="left:20px;top:476.5px;color:#333">1 : 25</div>
<svg class="a" style="left:202px;top:9px" width="5" height="4" viewBox="0 0 5 4"><path d="M0.5 1h4l-2 2.2z" fill="#333"/></svg>
<!--/CHROME-->
<!--RIBBON-->
<div class="a" style="left:130px;top:35px;width:1px;height:56px;background:#dedede"></div>
<div class="a" style="left:202px;top:35px;width:1px;height:56px;background:#dedede"></div>
<div class="a" style="left:314px;top:35px;width:1px;height:56px;background:#dedede"></div>
<div class="a" style="left:352px;top:35px;width:1px;height:56px;background:#dedede"></div>
<div class="a" style="left:548px;top:35px;width:1px;height:56px;background:#dedede"></div>
<div class="a" style="left:612px;top:35px;width:1px;height:56px;background:#dedede"></div>
<div class="a" style="left:637px;top:35px;width:1px;height:56px;background:#dedede"></div>
<div class="a" style="left:686px;top:35px;width:1px;height:46px;background:#e4e4e4"></div>
<div class="a" style="left:720px;top:35px;width:1px;height:56px;background:#dedede"></div>
<div class="a" style="left:770px;top:35px;width:1px;height:56px;background:#dedede"></div>
<svg class="a" style="left:6px;top:37px" width="22" height="20" viewBox="0 0 22 20"><circle cx="7" cy="6.5" r="5" fill="#fff" stroke="#666" stroke-width="0.9"/><text x="4.5" y="10" font-family="Liberation Sans" font-size="7.5" fill="#444">1</text><circle cx="14" cy="14" r="5" fill="#fff" stroke="#666" stroke-width="0.9"/><text x="11.5" y="17.5" font-family="Liberation Sans" font-size="7.5" fill="#444">2</text><circle cx="15.5" cy="5" r="2.52" fill="#f7a600"/><path d="M15.5 5L19.70 5.00" stroke="#f7a600" stroke-width="1.2"/><path d="M15.5 5L18.47 7.97" stroke="#f7a600" stroke-width="1.2"/><path d="M15.5 5L15.50 9.20" stroke="#f7a600" stroke-width="1.2"/><path d="M15.5 5L12.53 7.97" stroke="#f7a600" stroke-width="1.2"/><path d="M15.5 5L11.30 5.01" stroke="#f7a600" stroke-width="1.2"/><path d="M15.5 5L12.52 2.04" stroke="#f7a600" stroke-width="1.2"/><path d="M15.5 5L15.49 0.80" stroke="#f7a600" stroke-width="1.2"/><path d="M15.5 5L18.46 2.02" stroke="#f7a600" stroke-width="1.2"/></svg>
<svg class="a" style="left:31px;top:38px" width="11" height="10" viewBox="0 0 11 10"><path d="M1 6h6M1 6l2-1.5M1 6l2 1.5" stroke="#1f5fb0" stroke-width="1.2" fill="none"/><path d="M10 3H4M10 3L8 1.5M10 3L8 4.5" stroke="#3a8ad8" stroke-width="1.1" fill="none"/><path d="M7 9L9.5 2" stroke="#999" stroke-width="0.8"/></svg>
<svg class="a" style="left:31px;top:52px" width="11" height="11" viewBox="0 0 11 11"><circle cx="5.5" cy="5.5" r="4.5" fill="#fff" stroke="#777" stroke-width="0.9"/><path d="M4 3.5a1.8 1.8 0 1 1 2 2v1.5" fill="none" stroke="#e07a20" stroke-width="1.1"/><circle cx="6" cy="8.5" r="0.7" fill="#e07a20"/></svg>
<svg class="a" style="left:31px;top:68px" width="11" height="10" viewBox="0 0 11 10"><rect x="0.5" y="0.5" width="4" height="4.5" fill="#3fa34d"/><rect x="0.5" y="5" width="4" height="4.5" fill="#3fa34d"/><rect x="4.5" y="5" width="5.5" height="4.5" fill="#fff" stroke="#777" stroke-width="0.8"/></svg>
<svg class="a" style="left:84px;top:38px" width="11" height="10" viewBox="0 0 11 10"><rect x="0.5" y="0.5" width="10" height="9" fill="none" stroke="#c9a46a" stroke-width="0.9"/><path d="M0.5 3.5h10M0.5 6.5h10M5.5 0.5v3M3 3.5v3M8 3.5v3M5.5 6.5v3" stroke="#c9a46a" stroke-width="0.9"/></svg>
<svg class="a" style="left:84px;top:53px" width="10" height="10" viewBox="0 0 10 10"><circle cx="5" cy="5" r="2.6" fill="#3a8fdc"/><circle cx="5" cy="5" r="4.2" fill="none" stroke="#3a8fdc" stroke-width="1.3" stroke-dasharray="1.3 1"/></svg>
<svg class="a" style="left:84px;top:67px" width="11" height="11" viewBox="0 0 11 11"><rect x="0.5" y="0.5" width="8" height="7" rx="1" fill="#fbefd8" stroke="#c9a46a" stroke-width="0.9"/><rect x="3" y="3" width="7" height="6" rx="1" fill="#fff3e0" stroke="#c9a46a" stroke-width="0.9"/><path d="M6 7l4 3" stroke="#e0a000" stroke-width="1.5"/></svg>
<svg class="a" style="left:122px;top:56px" width="5" height="4" viewBox="0 0 5 4"><path d="M0.3 0.8h4.4l-2.2 2.5z" fill="#333"/></svg>
<svg class="a" style="left:74px;top:85px" width="5" height="4" viewBox="0 0 5 4"><path d="M0.3 0.8h4.4l-2.2 2.5z" fill="#333"/></svg>
<svg class="a" style="left:133px;top:37px" width="22" height="20" viewBox="0 0 22 20"><circle cx="7" cy="6.5" r="5" fill="#fff" stroke="#666" stroke-width="0.9"/><text x="4.5" y="10" font-family="Liberation Sans" font-size="7.5" fill="#444">1</text><circle cx="15.5" cy="6" r="2.52" fill="#f7a600"/><path d="M15.5 6L19.70 6.00" stroke="#f7a600" stroke-width="1.2"/><path d="M15.5 6L18.47 8.97" stroke="#f7a600" stroke-width="1.2"/><path d="M15.5 6L15.50 10.20" stroke="#f7a600" stroke-width="1.2"/><path d="M15.5 6L12.53 8.97" stroke="#f7a600" stroke-width="1.2"/><path d="M15.5 6L11.30 6.01" stroke="#f7a600" stroke-width="1.2"/><path d="M15.5 6L12.52 3.04" stroke="#f7a600" stroke-width="1.2"/><path d="M15.5 6L15.49 1.80" stroke="#f7a600" stroke-width="1.2"/><path d="M15.5 6L18.46 3.02" stroke="#f7a600" stroke-width="1.2"/><path d="M1.5 15h18M1.5 12.5v5M19.5 12.5v5" stroke="#444" stroke-width="0.9"/><path d="M1.5 15l2-1M1.5 15l2 1M19.5 15l-2-1M19.5 15l-2 1" stroke="#444" stroke-width="0.8"/></svg>
<svg class="a" style="left:158px;top:38px" width="11" height="10" viewBox="0 0 11 10"><circle cx="6" cy="4.5" r="3.8" fill="none" stroke="#3a8fdc" stroke-width="1.1"/><path d="M6 2.5v2h1.5" stroke="#3a8fdc" stroke-width="0.9" fill="none"/><path d="M1 9.5c0-3 1-4 3-4.5" stroke="#3a8fdc" stroke-width="1.2" fill="none"/></svg>
<svg class="a" style="left:158px;top:53px" width="11" height="10" viewBox="0 0 11 10"><path d="M1 7.5h9M3 4.5h7M8.5 3v3" stroke="#666" stroke-width="0.9"/></svg>
<svg class="a" style="left:158px;top:68px" width="11" height="10" viewBox="0 0 11 10"><path d="M1 3.5h9M1 6.5h9M8 1.5l2 2M3 8.5l-2-2" stroke="#666" stroke-width="0.9"/></svg>
<svg class="a" style="left:211px;top:37px" width="21" height="20" viewBox="0 0 21 20"><path d="M4 1v18M0 6h12" stroke="#888" stroke-width="1"/><path d="M5 5l1.5-2 1.5 2" stroke="#888" fill="none" stroke-width="0.7"/><text x="5" y="6" font-family="Liberation Sans" font-size="4.5" fill="#555">014</text><circle cx="14" cy="11" r="4.2" fill="#38b0c8"/><rect x="12" y="15" width="4" height="3" fill="#666"/></svg>
<svg class="a" style="left:238px;top:38px" width="11" height="10" viewBox="0 0 11 10"><path d="M3 0.5v9M0.5 2.5h6M0.5 6.5h3" stroke="#777" stroke-width="0.9"/><circle cx="7.5" cy="6.5" r="2.6" fill="#2fb0a8"/><path d="M7.5 9v1" stroke="#555"/></svg>
<svg class="a" style="left:238px;top:52px" width="11" height="11" viewBox="0 0 11 11"><rect x="0.5" y="5.5" width="7" height="4.5" fill="none" stroke="#888" stroke-width="0.9"/><path d="M2 7.5v2.5M4 7.5v2.5M6 7.5v2.5" stroke="#888" stroke-width="0.7"/><circle cx="7.5" cy="3.5" r="3" fill="#f5b800"/></svg>
<svg class="a" style="left:238px;top:68px" width="11" height="11" viewBox="0 0 11 11"><rect x="0.5" y="1" width="8" height="6.5" fill="#e8d2a8" stroke="#c9a46a" stroke-width="0.9"/><path d="M0.5 4h8" stroke="#c9a46a" stroke-width="0.8"/><circle cx="7.5" cy="7" r="2.5" fill="#f5b800"/></svg>
<svg class="a" style="left:262px;top:85px" width="5" height="4" viewBox="0 0 5 4"><path d="M0.3 0.8h4.4l-2.2 2.5z" fill="#333"/></svg>
<svg class="a" style="left:322px;top:37px" width="23" height="21" viewBox="0 0 23 21"><rect x="1" y="2.5" width="13" height="8" rx="1" fill="#fbefd8" stroke="#c9a46a" stroke-width="0.9"/><rect x="4" y="6" width="14" height="13" rx="2" fill="#fff" stroke="#666" stroke-width="1"/><path d="M8 10l3 3M8 10v2M8 10h2" stroke="#666" stroke-width="0.8" fill="none"/><circle cx="18" cy="5" r="2.6999999999999997" fill="#f7a600"/><path d="M18 5L22.50 5.00" stroke="#f7a600" stroke-width="1.2"/><path d="M18 5L21.18 8.18" stroke="#f7a600" stroke-width="1.2"/><path d="M18 5L18.00 9.50" stroke="#f7a600" stroke-width="1.2"/><path d="M18 5L14.82 8.19" stroke="#f7a600" stroke-width="1.2"/><path d="M18 5L13.50 5.01" stroke="#f7a600" stroke-width="1.2"/><path d="M18 5L14.81 1.82" stroke="#f7a600" stroke-width="1.2"/><path d="M18 5L17.99 0.50" stroke="#f7a600" stroke-width="1.2"/><path d="M18 5L21.17 1.81" stroke="#f7a600" stroke-width="1.2"/></svg>
<svg class="a" style="left:346px;top:67px" width="5" height="4" viewBox="0 0 5 4"><path d="M0.3 0.8h4.4l-2.2 2.5z" fill="#333"/></svg>
<svg class="a" style="left:356px;top:37px" width="24" height="19" viewBox="0 0 24 19"><path d="M1 2h21M2 7h20M1 12h21M2 17h20" stroke="#cdb183" stroke-width="1.8"/></svg>
<svg class="a" style="left:366px;top:70px" width="5" height="4" viewBox="0 0 5 4"><path d="M0.3 0.8h4.4l-2.2 2.5z" fill="#333"/></svg>
<svg class="a" style="left:384px;top:37px" width="12" height="11" viewBox="0 0 12 11"><rect x="0.5" y="0.5" width="6" height="5" fill="#fbefd8" stroke="#c9a46a" stroke-width="0.8"/><rect x="2" y="6" width="4" height="4" rx="1" fill="none" stroke="#3a8fdc" stroke-width="0.9"/><rect x="7" y="6" width="4" height="4" rx="1" fill="none" stroke="#3a8fdc" stroke-width="0.9"/><path d="M8 1.5h2.5v2.5" stroke="#555" stroke-width="0.8" fill="none"/></svg>
<svg class="a" style="left:384px;top:52px" width="12" height="12" viewBox="0 0 12 12"><rect x="0.5" y="1" width="8" height="8" fill="#e8d2a8" stroke="#888" stroke-width="0.8"/><path d="M6 6.5l5 5M11 6.5l-5 5" stroke="#e02020" stroke-width="1.4"/></svg>
<svg class="a" style="left:384px;top:67px" width="12" height="12" viewBox="0 0 12 12"><circle cx="5" cy="5" r="4.3" fill="#fff" stroke="#777" stroke-width="0.9"/><path d="M6 6.5l5 5M11 6.5l-5 5" stroke="#e02020" stroke-width="1.4"/></svg>
<svg class="a" style="left:421px;top:41px" width="5" height="4" viewBox="0 0 5 4"><path d="M0.3 0.8h4.4l-2.2 2.5z" fill="#333"/></svg>
<svg class="a" style="left:433px;top:37px" width="22" height="21" viewBox="0 0 22 21"><path d="M1 5h13M1 8h13M1 11h13M1 14h13M1 17h13" stroke="#cdb183" stroke-width="1.2"/><path d="M8 2h8l-2-1.5M16 2l-2 1.5" stroke="#444" stroke-width="0.9" fill="none"/><path d="M16 3c4 4 4 11 0 16M18 3c4 4 4 11 0 16" stroke="#7a8fb8" stroke-width="0.9" fill="none"/></svg>
<svg class="a" style="left:442px;top:70px" width="5" height="4" viewBox="0 0 5 4"><path d="M0.3 0.8h4.4l-2.2 2.5z" fill="#333"/></svg>
<svg class="a" style="left:462px;top:85px" width="5" height="4" viewBox="0 0 5 4"><path d="M0.3 0.8h4.4l-2.2 2.5z" fill="#333"/></svg>
<svg class="a" style="left:465px;top:37px" width="13" height="11" viewBox="0 0 13 11"><path d="M1 2l5 3M1 5l4 2" stroke="#3a8fdc" stroke-width="0.9"/><path d="M3 9l5-5 3 3-5 3z" fill="#e8d2a8" stroke="#555" stroke-width="0.8"/></svg>
<svg class="a" style="left:465px;top:52px" width="13" height="11" viewBox="0 0 13 11"><path d="M4 1h8v9H1z" fill="#d9b98a"/></svg>
<svg class="a" style="left:466px;top:67px" width="11" height="11" viewBox="0 0 11 11"><rect x="2.5" y="2.5" width="6" height="6" fill="#8fc3ee" stroke="#3a8fdc" stroke-width="0.8"/><path d="M4 0v2.5M7 0v2.5M4 8.5v2.5M7 8.5v2.5M0 4h2.5M0 7h2.5M8.5 4h2.5M8.5 7h2.5" stroke="#d9a050" stroke-width="0.8"/></svg>
<svg class="a" style="left:500px;top:37px" width="24" height="21" viewBox="0 0 24 21"><path d="M2 1v15M5 1v15M8 1v15M11 1v15" stroke="#d9c39a" stroke-width="1"/><path d="M14 9v10l2.5-2 2 3.5 1.5-1-2-3.5h3z" fill="#fff" stroke="#444" stroke-width="0.9"/></svg>
<svg class="a" style="left:526px;top:37px" width="12" height="11" viewBox="0 0 12 11"><path d="M2 1v9M5 1v9M8 1v9" stroke="#3a8fdc" stroke-width="1.6"/><path d="M6 4l4 4h-2l1 2" fill="#fff" stroke="#444" stroke-width="0.7"/></svg>
<svg class="a" style="left:526px;top:52px" width="12" height="11" viewBox="0 0 12 11"><path d="M1 1v9M3.5 1v9M6 1v9" stroke="#7aaee0" stroke-width="1"/><rect x="6" y="2" width="5" height="7" fill="#d9c39a"/><path d="M6 4l4 4h-2l1 2" fill="#fff" stroke="#444" stroke-width="0.7"/></svg>
<svg class="a" style="left:526px;top:67px" width="12" height="12" viewBox="0 0 12 12"><rect x="0.5" y="0.5" width="9" height="10" fill="#fff" stroke="#888" stroke-width="0.8"/><path d="M2 3h6M2 5.5h6M2 8h4" stroke="#c9a46a" stroke-width="0.8"/><rect x="5" y="6" width="5" height="4" fill="#f5c020"/></svg>
<svg class="a" style="left:541px;top:56px" width="5" height="4" viewBox="0 0 5 4"><path d="M0.3 0.8h4.4l-2.2 2.5z" fill="#333"/></svg>
<svg class="a" style="left:541px;top:71px" width="5" height="4" viewBox="0 0 5 4"><path d="M0.3 0.8h4.4l-2.2 2.5z" fill="#333"/></svg>
<svg class="a" style="left:556px;top:37px" width="24" height="21" viewBox="0 0 24 21"><path d="M3 12l11-8M5 16l11-8M7 20l11-8M6 4l12 12M3 7l12 12" stroke="#d99a40" stroke-width="1.1"/><path d="M15 2l6 1.5-2 5-5-2z" fill="#f5a800"/><circle cx="3" cy="5" r="1.5" fill="none" stroke="#666" stroke-width="0.8"/><circle cx="3" cy="17" r="1.5" fill="none" stroke="#666" stroke-width="0.8"/></svg>
<svg class="a" style="left:590px;top:38px" width="11" height="10" viewBox="0 0 11 10"><path d="M0.5 8L3 2l3 6 3-4 1.5 3" stroke="#666" stroke-width="1" fill="none"/></svg>
<svg class="a" style="left:590px;top:53px" width="11" height="10" viewBox="0 0 11 10"><path d="M0.5 9h2V1.5h4v7h4" stroke="#d9a050" stroke-width="1" fill="none"/></svg>
<svg class="a" style="left:590px;top:68px" width="11" height="10" viewBox="0 0 11 10"><path d="M1 9.5L5.5 1l4.5 8.5" stroke="#d9a050" stroke-width="1.1" fill="none"/></svg>
<svg class="a" style="left:604px;top:41px" width="5" height="4" viewBox="0 0 5 4"><path d="M0.3 0.8h4.4l-2.2 2.5z" fill="#333"/></svg>
<svg class="a" style="left:604px;top:56px" width="5" height="4" viewBox="0 0 5 4"><path d="M0.3 0.8h4.4l-2.2 2.5z" fill="#333"/></svg>
<svg class="a" style="left:590px;top:85px" width="5" height="4" viewBox="0 0 5 4"><path d="M0.3 0.8h4.4l-2.2 2.5z" fill="#333"/></svg>
<svg class="a" style="left:619px;top:38px" width="11" height="10" viewBox="0 0 11 10"><path d="M1 1v8h9V1" stroke="#c9a46a" stroke-width="1.1" fill="none"/><path d="M3 5h5" stroke="#c9a46a"/></svg>
<svg class="a" style="left:619px;top:53px" width="11" height="10" viewBox="0 0 11 10"><rect x="0.5" y="0.5" width="8" height="9" fill="#e8d2a8"/><path d="M0.5 3.5h8M0.5 6.5h8M4 0.5v9" stroke="#b89060" stroke-width="0.7"/><circle cx="8" cy="3" r="2.5" fill="#f5c020"/></svg>
<svg class="a" style="left:619px;top:68px" width="11" height="10" viewBox="0 0 11 10"><rect x="0.5" y="0.5" width="8" height="9" fill="#e8d2a8"/><path d="M0.5 3.5h8M0.5 6.5h8" stroke="#b89060" stroke-width="0.7"/><path d="M7 1v7M5 6l2 2.5 2-2.5" stroke="#2a7fd8" stroke-width="1.2" fill="none"/></svg>
<svg class="a" style="left:641px;top:37px" width="24" height="21" viewBox="0 0 24 21"><circle cx="6" cy="10" r="5" fill="#fff" stroke="#777" stroke-width="0.9"/><text x="3.8" y="13.5" font-family="Liberation Sans" font-size="7.5" fill="#444">1</text><circle cx="13" cy="6" r="5" fill="#fff" stroke="#777" stroke-width="0.9"/><text x="10.8" y="9.5" font-family="Liberation Sans" font-size="7.5" fill="#444">8</text><rect x="11" y="11" width="4.5" height="9" rx="1.5" fill="#2f7fd0"/><rect x="16.5" y="11" width="4.5" height="9" rx="1.5" fill="#2f7fd0"/><rect x="14" y="13" width="3" height="3" fill="#2f7fd0"/></svg>
<svg class="a" style="left:670px;top:38px" width="11" height="10" viewBox="0 0 11 10"><path d="M5.5 1L10 9H1z" fill="#e6e6e6" stroke="#bbb" stroke-width="0.8"/></svg>
<svg class="a" style="left:669px;top:52px" width="12" height="11" viewBox="0 0 12 11"><path d="M2 7a3 3 0 0 1 1-5a3.5 3.5 0 0 1 6 0.5a2.5 2.5 0 0 1 1 4.5z" fill="#eee" stroke="#aaa" stroke-width="0.8"/><path d="M3 10l2-2M7 10l2-2" stroke="#aaa" stroke-width="0.8"/></svg>
<svg class="a" style="left:670px;top:68px" width="11" height="11" viewBox="0 0 11 11"><path d="M1.5 5a4 4 0 0 1 7.5-2M9.5 6a4 4 0 0 1-7.5 2" stroke="#2fae4a" stroke-width="1.6" fill="none"/><path d="M9 0.5v3h-3M2 10.5v-3h3" stroke="#2fae4a" stroke-width="1.2" fill="none"/></svg>
<svg class="a" style="left:694px;top:37px" width="20" height="21" viewBox="0 0 20 21"><rect x="0.5" y="0.5" width="18" height="19" fill="#fff" stroke="#666" stroke-width="1"/><path d="M4 4v9h4M8 7h4M12 10v5h3" stroke="#888" stroke-width="0.7" fill="none"/><circle cx="4" cy="4" r="2" fill="#49a8e0"/><circle cx="8" cy="7" r="2" fill="#49a8e0"/><circle cx="8" cy="12" r="2" fill="#49a8e0"/><circle cx="13" cy="16" r="2" fill="#49a8e0"/></svg>
<svg class="a" style="left:735px;top:37px" width="22" height="21" viewBox="0 0 22 21"><path d="M1 2h8l3 3v12H1z" fill="#fff" stroke="#666" stroke-width="0.9"/><path d="M3 4h8l3 3v12H3z" fill="#fff" stroke="#666" stroke-width="0.9"/><path d="M5 6h8l3 3v11H5z" fill="#fff" stroke="#666" stroke-width="0.9"/><path d="M8 12h3v2h3" stroke="#777" fill="none" stroke-width="0.8"/><path d="M9 16h7v-3l5 4.5-5 4.5v-3H9z" fill="#2a7fd8"/></svg>
<svg class="a" style="left:743px;top:70px" width="5" height="4" viewBox="0 0 5 4"><path d="M0.3 0.8h4.4l-2.2 2.5z" fill="#333"/></svg>
<svg class="a" style="left:760px;top:85px" width="5" height="4" viewBox="0 0 5 4"><path d="M0.3 0.8h4.4l-2.2 2.5z" fill="#333"/></svg>
<svg class="a" style="left:774px;top:38px" width="11" height="11" viewBox="0 0 11 11"><circle cx="5.5" cy="5.5" r="2" fill="none" stroke="#777" stroke-width="1"/><circle cx="5.5" cy="5.5" r="4" fill="none" stroke="#777" stroke-width="1.6" stroke-dasharray="1.6 1.2"/></svg>
<svg class="a" style="left:773px;top:52px" width="13" height="12" viewBox="0 0 13 12"><circle cx="6" cy="6" r="5.2" fill="#fff" stroke="#2d6fc0" stroke-width="1.1"/><text x="3.6" y="9.3" font-family="Liberation Sans" font-size="8" fill="#2d6fc0">?</text></svg>
<svg class="a" style="left:773px;top:67px" width="13" height="12" viewBox="0 0 13 12"><path d="M0.5 1h6l4 5-4 5h-6z" fill="#f5a020"/><path d="M6 10l6-5" stroke="#3a8fdc" stroke-width="1.1"/></svg>
<svg class="a" style="left:788px;top:56px" width="5" height="4" viewBox="0 0 5 4"><path d="M0.3 0.8h4.4l-2.2 2.5z" fill="#333"/></svg>
<svg class="a" style="left:788px;top:71px" width="5" height="4" viewBox="0 0 5 4"><path d="M0.3 0.8h4.4l-2.2 2.5z" fill="#333"/></svg>
<!--/RIBBON-->
<!--VIEW-->
<svg class="a" style="left:478px;top:145px" width="72" height="62" viewBox="0 0 72 62"><g transform="translate(-478,-145)"><ellipse cx="513" cy="182.5" rx="32" ry="19.2" fill="#f6f6f6" stroke="#c4c4c4" stroke-width="0.8"/><ellipse cx="513" cy="182.5" rx="29" ry="16.5" fill="none" stroke="#dcdcdc" stroke-width="0.6" stroke-dasharray="1.2 1.2"/><ellipse cx="513" cy="182.5" rx="24.6" ry="12.5" fill="#fdfdfd" stroke="#cfcfcf" stroke-width="0.7"/><ellipse cx="513" cy="185" rx="16" ry="7" fill="#ececec"/><polygon points="496,158.6 512.5,150.5 529.8,158 512.5,167.8" fill="#f7f7f7" stroke="#7a7a7a" stroke-width="0.7"/><polygon points="496,158.6 512.5,167.8 512.5,187.5 496.5,178.3" fill="#efefef" stroke="#7a7a7a" stroke-width="0.7"/><polygon points="512.5,167.8 529.8,158 529,177.7 512.5,187.5" fill="#e6e6e6" stroke="#7a7a7a" stroke-width="0.7"/><text x="0" y="0" font-family="Liberation Sans" font-weight="bold" font-size="4.2" fill="#6a6a6a" transform="translate(498.5,170.5) rotate(27)">FRONT</text><text x="0" y="0" font-family="Liberation Sans" font-weight="bold" font-size="4.2" fill="#6a6a6a" transform="translate(515,178.5) rotate(-29)">RIGHT</text><text x="0" y="0" font-family="Liberation Sans" font-weight="bold" font-size="3.6" fill="#777" transform="translate(509.5,157) rotate(26)">TOP</text><circle cx="488.5" cy="194" r="2.3" fill="#fff" stroke="#aaa" stroke-width="0.7"/><rect x="533" y="192" width="6" height="4" fill="#fff" stroke="#aaa" stroke-width="0.7" transform="rotate(-25 536 194)"/><path d="M493 166l3-1M530 165l3 1" stroke="#bbb" stroke-width="0.8"/></g></svg>
<svg class="a" style="left:535px;top:207px" width="24" height="75" viewBox="0 0 24 75"><rect x="1" y="1" width="22" height="72.5" rx="3" fill="#fafafa" stroke="#9c9c9c" stroke-width="1"/><circle cx="18" cy="5.5" r="1.8" fill="none" stroke="#999" stroke-width="0.9"/><circle cx="18" cy="69" r="1.8" fill="none" stroke="#999" stroke-width="0.9"/><path d="M11 13.8a6.2 6.2 0 1 0 6.2 6.2v-6.2z" fill="#f2f2f2" stroke="#8a8a8a" stroke-width="1"/><circle cx="11" cy="20" r="3.5" fill="#fff" stroke="#8a8a8a" stroke-width="0.9"/><path d="M10 32.5h2l-1 1.2z" fill="#555"/><path d="M2 36.5h20" stroke="#d0d0d0" stroke-width="0.8"/><rect x="6" y="42" width="7" height="7" fill="#c5e4bd" stroke="#8cc483" stroke-width="0.6"/><path d="M6 44.5h7M6 46.5h7M8.5 42v7M10.5 42v7" stroke="#9fd096" stroke-width="0.5"/><circle cx="13.5" cy="48.5" r="2.2" fill="none" stroke="#444" stroke-width="0.9"/><path d="M15 50l2 2" stroke="#444" stroke-width="1"/><path d="M10 58.5h2l-1 1.2z" fill="#555"/></svg>
<svg class="a" style="left:558px;top:123px" width="10" height="10" viewBox="0 0 10 10"><path d="M2 6.5l3-3 3 3" fill="none" stroke="#888" stroke-width="1"/></svg>
<div class="a" style="left:562px;top:295px;width:3px;height:9px;background:#c4c4c4"></div>
<svg class="a" style="left:558px;top:462px" width="10" height="10" viewBox="0 0 10 10"><path d="M2 3.5l3 3 3-3" fill="none" stroke="#888" stroke-width="1"/></svg>
<svg class="a" style="left:556px;top:477px" width="12" height="10" viewBox="0 0 12 10"><circle cx="6" cy="8" r="0.7" fill="#8a8"/><circle cx="9" cy="6" r="0.7" fill="#8a8"/><circle cx="9" cy="8" r="0.7" fill="#8a8"/></svg>
<svg class="a" style="left:277px;top:476px" width="8" height="11" viewBox="0 0 8 11"><path d="M5.5 2.5l-3 3 3 3" fill="none" stroke="#888" stroke-width="1"/></svg>
<svg class="a" style="left:547px;top:476px" width="10" height="11" viewBox="0 0 10 11"><path d="M3.5 2.5l3 3-3 3" fill="none" stroke="#888" stroke-width="1"/></svg>
<div class="a" style="left:410px;top:479px;width:14px;height:4px;background:#c8c8c8"></div>
<svg class="a" style="left:55px;top:476px" width="11" height="11" viewBox="0 0 11 11"><rect x="0.5" y="1.5" width="9" height="7" fill="#aaa" stroke="#555" stroke-width="0.8"/><path d="M2 3.5h6M2 5h6M2 6.5h6" stroke="#eee" stroke-width="0.5" stroke-dasharray="0.8 0.8"/></svg>
<svg class="a" style="left:72px;top:476px" width="11" height="11" viewBox="0 0 11 11"><path d="M0.5 3l2.5-2.5h6v6l-2.5 2.5h-6z M0.5 3h6v6M6.5 3l2.5-2.5" fill="none" stroke="#555" stroke-width="0.8"/></svg>
<svg class="a" style="left:87px;top:476px" width="11" height="11" viewBox="0 0 11 11"><circle cx="4" cy="4.5" r="2.3" fill="#f5a800"/><path d="M4 0v1.2M0 4.5h1.2M1.2 1.7l.9.9M6.8 1.7l-.9.9" stroke="#f5a800" stroke-width="0.8"/><circle cx="7.5" cy="6.5" r="2" fill="#3ab0c8"/><path d="M7.5 8.5v1.5" stroke="#444"/></svg>
<svg class="a" style="left:106px;top:476px" width="11" height="11" viewBox="0 0 11 11"><path d="M1 8h8M2 6.5a3.5 3.5 0 0 1 6.5 0" fill="#ccc" stroke="#555" stroke-width="0.9"/><circle cx="5" cy="3.5" r="2.8" fill="#fff" stroke="#555" stroke-width="0.8"/><rect x="7" y="6" width="3" height="3" fill="#aaa"/></svg>
<svg class="a" style="left:123px;top:476px" width="11" height="11" viewBox="0 0 11 11"><path d="M1 2l3-1 4 2 1 3" stroke="#555" fill="none" stroke-width="0.8"/><circle cx="7" cy="6" r="1.8" fill="#3ab0c8"/><path d="M7 8v2" stroke="#3ab0c8"/></svg>
<svg class="a" style="left:138px;top:476px" width="11" height="11" viewBox="0 0 11 11"><path d="M1 5h5M4.5 1v9M6.5 3v4" stroke="#1a6fc8" stroke-width="1"/><path d="M6 6l3 3M9 6l-3 3" stroke="#e02020" stroke-width="1.1"/></svg>
<svg class="a" style="left:157px;top:476px" width="11" height="11" viewBox="0 0 11 11"><path d="M1 5h5M4.5 1v9M6.5 3v4" stroke="#1a6fc8" stroke-width="1"/><circle cx="8" cy="7.5" r="1.8" fill="#3ab0c8"/></svg>
<svg class="a" style="left:169px;top:476px" width="11" height="11" viewBox="0 0 11 11"><path d="M0.5 5L5 1l4.5 4" fill="none" stroke="#555" stroke-width="0.9"/><path d="M1.8 4.5v5h6.4v-5" fill="#ddd" stroke="#555" stroke-width="0.8"/><circle cx="7" cy="7.5" r="2" fill="#3ab0c8"/></svg>
<svg class="a" style="left:184px;top:476px" width="11" height="11" viewBox="0 0 11 11"><path d="M1 8l3-5 3 3 2-4" fill="none" stroke="#555" stroke-width="0.9"/><circle cx="3" cy="6" r="1.5" fill="none" stroke="#555" stroke-width="0.7"/></svg>
<svg class="a" style="left:201px;top:476px" width="11" height="11" viewBox="0 0 11 11"><circle cx="4" cy="4" r="2.4" fill="#3ab0c8"/><path d="M4 6.5v2.5" stroke="#444" stroke-width="0.9"/></svg>
<svg class="a" style="left:218px;top:476px" width="11" height="11" viewBox="0 0 11 11"><rect x="0.5" y="1.5" width="7" height="7" fill="none" stroke="#555" stroke-width="0.7" stroke-dasharray="1.2 0.8"/><path d="M5 6l3 3" stroke="#555"/></svg>
<svg class="a" style="left:234px;top:476px" width="11" height="11" viewBox="0 0 11 11"><rect x="1" y="1" width="7" height="8" fill="#ddd" stroke="#666" stroke-width="0.8"/><path d="M2 3h5M2 5h5M2 7h5" stroke="#888" stroke-width="0.6"/></svg>
<svg class="a" style="left:252px;top:476px" width="11" height="11" viewBox="0 0 11 11"><rect x="1" y="3" width="5" height="5" fill="#fff" stroke="#555" stroke-width="0.8"/><rect x="3" y="1.5" width="5" height="5" fill="#bcdcf0" stroke="#555" stroke-width="0.8"/></svg>
<svg class="a" style="left:265px;top:476px" width="11" height="11" viewBox="0 0 11 11"><path d="M1 1v8M1 2h8M9 1v3M1 9h4" stroke="#555" stroke-width="0.9"/><circle cx="8" cy="7.5" r="1.8" fill="#3ab0c8"/></svg>
<svg class="a" style="left:150px;top:489px" width="10" height="11" viewBox="0 0 10 11"><circle cx="3" cy="4" r="2.5" fill="#3a8fdc"/><circle cx="7" cy="4" r="2.5" fill="#e04040"/><circle cx="5" cy="7.5" r="2.5" fill="#40b050"/></svg>
<svg class="a" style="left:287px;top:492px" width="6" height="5" viewBox="0 0 6 5"><path d="M0.5 1l2.5 2.5 2.5-2.5" fill="none" stroke="#999" stroke-width="0.8"/></svg>
<svg class="a" style="left:299px;top:489px" width="12" height="11" viewBox="0 0 12 11"><rect x="1" y="6" width="4" height="4" fill="none" stroke="#777" stroke-width="0.8"/><rect x="5" y="1" width="4" height="4" fill="none" stroke="#777" stroke-width="0.8"/><path d="M3 6V3h2" stroke="#777" stroke-width="0.7" fill="none"/></svg>
<div class="t" style="left:310px;top:490px;color:#555">:0</div>
<svg class="a" style="left:331px;top:489px" width="11" height="11" viewBox="0 0 11 11"><rect x="0.5" y="0.5" width="9" height="9" fill="#fff" stroke="#555" stroke-width="0.9"/><path d="M0.5 3h9M3 3v6.5M3 5.5h6.5M3 7.5h6.5" stroke="#555" stroke-width="0.7"/></svg>
<svg class="a" style="left:348px;top:489px" width="11" height="11" viewBox="0 0 11 11"><path d="M0.5 0.5h9v7h-5l-2.5 2v-2h-1.5z" fill="#fff" stroke="#777" stroke-width="0.9"/><path d="M2 3h6M2 5h6" stroke="#777" stroke-width="0.6"/></svg>
<svg class="a" style="left:632px;top:489px" width="11" height="11" viewBox="0 0 11 11"><rect x="0.5" y="0.5" width="7" height="2.5" fill="#e89a5a"/><path d="M4 3l0 7 2-2 1.5 2.5 1-.5-1.5-2.5h2.5z" fill="#fff" stroke="#444" stroke-width="0.7"/></svg>
<svg class="a" style="left:648px;top:489px" width="11" height="11" viewBox="0 0 11 11"><path d="M1 2v7M3 2v7" stroke="#3a8fdc" stroke-width="1"/><path d="M4 3l0 7 2-2 1.5 2.5 1-.5-1.5-2.5h2.5z" fill="#fff" stroke="#444" stroke-width="0.7"/><path d="M7 0.5l3 3M10 0.5l-3 3" stroke="#e02020" stroke-width="1"/></svg>
<svg class="a" style="left:664px;top:489px" width="11" height="11" viewBox="0 0 11 11"><path d="M1 1h4M3 1v5" stroke="#444" stroke-width="0.8"/><path d="M4 3l0 7 2-2 1.5 2.5 1-.5-1.5-2.5h2.5z" fill="#fff" stroke="#444" stroke-width="0.7"/></svg>
<svg class="a" style="left:679px;top:489px" width="11" height="11" viewBox="0 0 11 11"><path d="M1 2l3 1v7l-3-1z" fill="#3a8fdc"/><path d="M4 3l0 7 2-2 1.5 2.5 1-.5-1.5-2.5h2.5z" fill="#fff" stroke="#444" stroke-width="0.7"/><path d="M7 0.5l3 3M10 0.5l-3 3" stroke="#e02020" stroke-width="1"/></svg>
<svg class="a" style="left:697px;top:489px" width="11" height="11" viewBox="0 0 11 11"><path d="M4 0.5v9M0.5 4h7" stroke="#444" stroke-width="1"/><path d="M5 4l0 6 1.5-1.5 1 2 1-.5-1-2h2z" fill="#fff" stroke="#444" stroke-width="0.6"/></svg>
<svg class="a" style="left:713px;top:489px" width="11" height="11" viewBox="0 0 11 11"><circle cx="5" cy="5" r="4" fill="none" stroke="#aaa" stroke-width="0.9" stroke-dasharray="1.2 1"/></svg>
<svg class="a" style="left:726px;top:489px" width="11" height="11" viewBox="0 0 11 11"><path d="M0.5 1h9l-3.5 4v5l-2-1.5v-3.5z" fill="#fff" stroke="#555" stroke-width="0.9"/></svg>
<div class="t" style="left:735px;top:490px;color:#444">:0</div>
<svg class="a" style="left:481px;top:492px" width="6" height="5" viewBox="0 0 6 5"><path d="M0.5 1l2.5 2.5 2.5-2.5" fill="none" stroke="#aaa" stroke-width="0.8"/></svg>
<!--/VIEW-->
<!--PANEL-->
<div class="t" style="left:573px;top:110.8px;color:#444">Reinforcement Browser</div>
<svg class="a" style="left:789px;top:112px" width="9" height="9"><path d="M1.5 1.5L7.5 7.5M7.5 1.5L1.5 7.5" stroke="#555" stroke-width="1.1"/></svg>
<div class="a" style="left:575px;top:124px;width:206px;height:16px;border:1px solid #cdcdcd;background:#fff"></div>
<div class="t" style="left:594px;top:126.5px;color:#8c8c8c">Search Reinforcement</div>
<svg class="a" style="left:578px;top:125px" width="16" height="14"><circle cx="7" cy="6" r="3.6" fill="#e8eef3" stroke="#8a8a8a" stroke-width="0.9"/><path d="M4.5 8.5L2 11.5" stroke="#777" stroke-width="1.3"/><circle cx="7" cy="6" r="1.2" fill="#9aa"/><path d="M12 6.5l2.5 0l-1.25 1.5z" fill="#666"/></svg>
<svg class="a" style="left:784px;top:125px" width="13" height="13"><path d="M0.5 1h11.5l-4.5 5v5.5l-2.5-1.5v-4z" fill="#9a9a9a" stroke="#7a7a7a" stroke-width="0.6"/></svg>
<div class="a" style="left:571px;top:266px;width:225px;height:11px;background:#efefef"></div>
<div class="a" style="left:576.5px;top:149px;width:5px;height:1px;background:#555"></div>
<div class="t" style="left:586px;top:144.0px;color:#222;">ReinforcementBrowser.rvt</div>
<div class="a" style="left:587px;top:160px;width:5px;height:1px;background:#555"></div><div class="a" style="left:589px;top:158px;width:1px;height:5px;background:#555"></div>
<svg class="a" style="left:596px;top:156px" width="9" height="9"><path d="M4.5 0.5L8.7 8.3H0.3z" fill="#f5c518" stroke="#b08800" stroke-width="0.6"/><path d="M4.5 3v2.8M4.5 6.6v0.9" stroke="#222" stroke-width="1"/></svg>
<div class="t" style="left:606px;top:155.12px;color:#222;">No Assignment</div>
<div class="a" style="left:587px;top:171px;width:5px;height:1px;background:#555"></div>
<svg class="a" style="left:595px;top:167px" width="10" height="9"><path d="M0.5 1h6.8l2.4 2.4v5.1h-9.2z" fill="#f2f5fa" stroke="#6f6f6f" stroke-width="0.8"/><path d="M4.8 8.5h4.9v-4.3z" fill="#2b9ec6"/></svg>
<div class="t" style="left:606px;top:166.24px;color:#222;">RC-01</div>
<div class="a" style="left:596.6px;top:182px;width:5px;height:1px;background:#555"></div>
<svg class="a" style="left:605px;top:178px" width="10" height="9"><rect x="0.5" y="0.5" width="8.5" height="8.5" rx="1.5" fill="#f8f1e8" stroke="#c9b49c" stroke-width="0.8"/><circle cx="2.8" cy="2.8" r="0.7" fill="#555"/><circle cx="6.7" cy="2.8" r="0.7" fill="#555"/><circle cx="2.8" cy="6.7" r="0.7" fill="#555"/><circle cx="6.7" cy="6.7" r="0.7" fill="#555"/></svg>
<div class="t" style="left:616px;top:177.36px;color:#222;">Rebar Sets</div>
<div class="a" style="left:605.6px;top:193px;width:5px;height:1px;background:#555"></div>
<div class="t" style="left:617px;top:188.48px;color:#222;font-weight:bold">1</div>
<div class="a" style="left:617px;top:205px;width:5px;height:1px;background:#555"></div>
<div class="t" style="left:625.5px;top:199.6px;color:#222;">450307</div>
<svg class="a" style="left:634.5px;top:211px" width="11" height="9"><rect x="0.5" y="1.5" width="8" height="6.5" rx="1.5" fill="#fff" stroke="#666" stroke-width="0.8"/><path d="M3 7.5h6v-3" fill="none" stroke="#666" stroke-width="0.8"/></svg>
<div class="t" style="left:646px;top:210.72px;color:#222;">703540</div>
<div class="a" style="left:605.6px;top:227px;width:5px;height:1px;background:#555"></div><div class="a" style="left:607.6px;top:225px;width:1px;height:5px;background:#555"></div>
<div class="t" style="left:617px;top:221.83999999999997px;color:#222;font-weight:bold">2</div>
<div class="a" style="left:596.6px;top:238px;width:5px;height:1px;background:#555"></div><div class="a" style="left:598.6px;top:236px;width:1px;height:5px;background:#555"></div>
<svg class="a" style="left:605px;top:233px" width="10" height="9"><rect x="0.5" y="0.5" width="9" height="8" fill="#f6ead8" stroke="#a07850" stroke-width="0.8"/><path d="M3 0.5v8M6 0.5v8M0.5 3h9M0.5 6h9" stroke="#a07850" stroke-width="0.6"/><path d="M2 7l5-5" stroke="#d8a050" stroke-width="0.8"/></svg>
<div class="t" style="left:616px;top:232.95999999999998px;color:#222;">Fabrics</div>
<div class="a" style="left:596.6px;top:249px;width:5px;height:1px;background:#555"></div><div class="a" style="left:598.6px;top:247px;width:1px;height:5px;background:#555"></div>
<svg class="a" style="left:605px;top:245px" width="10" height="9"><path d="M0.5 8.5L5 0.8L9.5 8.5" fill="none" stroke="#d88a2a" stroke-width="1.1"/></svg>
<div class="t" style="left:616px;top:244.07999999999998px;color:#222;">Linear Spacers</div>
<div class="a" style="left:587px;top:260px;width:5px;height:1px;background:#555"></div><div class="a" style="left:589px;top:258px;width:1px;height:5px;background:#555"></div>
<svg class="a" style="left:595px;top:256px" width="10" height="9"><path d="M0.5 1h6.8l2.4 2.4v5.1h-9.2z" fill="#f2f5fa" stroke="#6f6f6f" stroke-width="0.8"/><path d="M4.8 8.5h4.9v-4.3z" fill="#2b9ec6"/></svg>
<div class="t" style="left:606px;top:255.2px;color:#222;">RC-02</div>
<div class="a" style="left:587px;top:271px;width:5px;height:1px;background:#555"></div><div class="a" style="left:589px;top:269px;width:1px;height:5px;background:#555"></div>
<svg class="a" style="left:595px;top:267px" width="10" height="9"><path d="M0.5 1h6.8l2.4 2.4v5.1h-9.2z" fill="#f2f5fa" stroke="#6f6f6f" stroke-width="0.8"/><path d="M4.8 8.5h4.9v-4.3z" fill="#2b9ec6"/></svg>
<div class="t" style="left:606px;top:266.32px;color:#222;">RC-03</div>
<div class="a" style="left:587px;top:282px;width:5px;height:1px;background:#555"></div><div class="a" style="left:589px;top:280px;width:1px;height:5px;background:#555"></div>
<svg class="a" style="left:595px;top:278px" width="10" height="9"><path d="M0.5 1h6.8l2.4 2.4v5.1h-9.2z" fill="#f2f5fa" stroke="#6f6f6f" stroke-width="0.8"/><path d="M4.8 8.5h4.9v-4.3z" fill="#2b9ec6"/></svg>
<div class="t" style="left:606px;top:277.44px;color:#222;">RC-04</div>
<div class="a" style="left:578px;top:153px;width:1px;height:130px;border-left:1px dotted #c8c8c8"></div>
<div class="a" style="left:589px;top:176px;width:1px;height:74px;border-left:1px dotted #c8c8c8"></div>
<div class="a" style="left:598px;top:187px;width:1px;height:41px;border-left:1px dotted #c8c8c8"></div>
<div class="a" style="left:608px;top:198px;width:1px;height:8px;border-left:1px dotted #c8c8c8"></div>
<div class="a" style="left:619px;top:209px;width:1px;height:7px;border-left:1px dotted #c8c8c8"></div>
<div class="a" style="left:579px;top:160px;width:7px;height:1px;border-top:1px dotted #c8c8c8"></div>
<div class="a" style="left:579px;top:171px;width:7px;height:1px;border-top:1px dotted #c8c8c8"></div>
<div class="a" style="left:579px;top:260px;width:7px;height:1px;border-top:1px dotted #c8c8c8"></div>
<div class="a" style="left:579px;top:271px;width:7px;height:1px;border-top:1px dotted #c8c8c8"></div>
<div class="a" style="left:579px;top:282px;width:7px;height:1px;border-top:1px dotted #c8c8c8"></div>
<div class="a" style="left:590px;top:182px;width:6px;height:1px;border-top:1px dotted #c8c8c8"></div>
<div class="a" style="left:590px;top:238px;width:6px;height:1px;border-top:1px dotted #c8c8c8"></div>
<div class="a" style="left:590px;top:249px;width:6px;height:1px;border-top:1px dotted #c8c8c8"></div>
<div class="a" style="left:599px;top:193px;width:6px;height:1px;border-top:1px dotted #c8c8c8"></div>
<div class="a" style="left:599px;top:227px;width:6px;height:1px;border-top:1px dotted #c8c8c8"></div>
<div class="a" style="left:609px;top:205px;width:7px;height:1px;border-top:1px dotted #c8c8c8"></div>
<div class="a" style="left:620px;top:216px;width:13px;height:1px;border-top:1px dotted #c8c8c8"></div>
<div class="a" style="left:624px;top:272px;width:112px;height:65px;background:#f0f0f0;border:1px solid #bdbdbd;box-shadow:2px 2px 2px rgba(0,0,0,0.25)"></div>
<div class="a" style="left:643px;top:273px;width:1px;height:63px;background:#e2e2e2"></div>
<div class="a" style="left:626px;top:274px;width:107px;height:14px;background:#cce4f7;border:1px solid #8ec5ee"></div>
<div class="a" style="left:645px;top:302px;width:89px;height:1px;background:#dadada"></div>
<div class="a" style="left:645px;top:319px;width:89px;height:1px;background:#dadada"></div>
<div class="t" style="left:648px;top:276px;color:#222">Select All</div>
<div class="t" style="left:648px;top:289.8px;color:#222">Copy All IDs</div>
<div class="t" style="left:648px;top:306.4px;color:#222">Expand Selected</div>
<div class="t" style="left:648px;top:323.4px;color:#222">Load All</div>
<svg class="a" style="left:628px;top:276px" width="12" height="10"><path d="M1 1h4v3" fill="none" stroke="#3a8fc8" stroke-width="0.9"/><path d="M5 3l1 6 1.5-2 2 2.5" fill="none" stroke="#333" stroke-width="0.9"/></svg>
<div class="a" style="left:629px;top:290px;width:9px;height:8px;background:#3fae49"></div>
<div class="a" style="left:631px;top:288px;width:9px;height:7px;background:#79c97f;opacity:.8"></div>
<svg class="a" style="left:628px;top:306px" width="12" height="10"><path d="M5.5 1.5v6M2.5 4.5h6" stroke="#888" stroke-width="1"/></svg>
<svg class="a" style="left:628px;top:322px" width="12" height="12"><rect x="1" y="1" width="7" height="6" fill="#6cc070"/><path d="M5 5h5l-2.5 4z" fill="#1f9a3a"/></svg>
<div class="a" style="left:571px;top:473px;width:225px;height:12px;background:#d3d3d3"></div>
<div class="a" style="left:571px;top:473px;width:84px;height:12px;background:#f0f0f0"></div>
<div class="t" style="left:574px;top:474.5px;color:#333">Reinforcement Browser</div>
<div class="t" style="left:658px;top:474.5px;color:#333">Project Browser - Reinforceme...</div>
<!--/PANEL-->
</body></html>
